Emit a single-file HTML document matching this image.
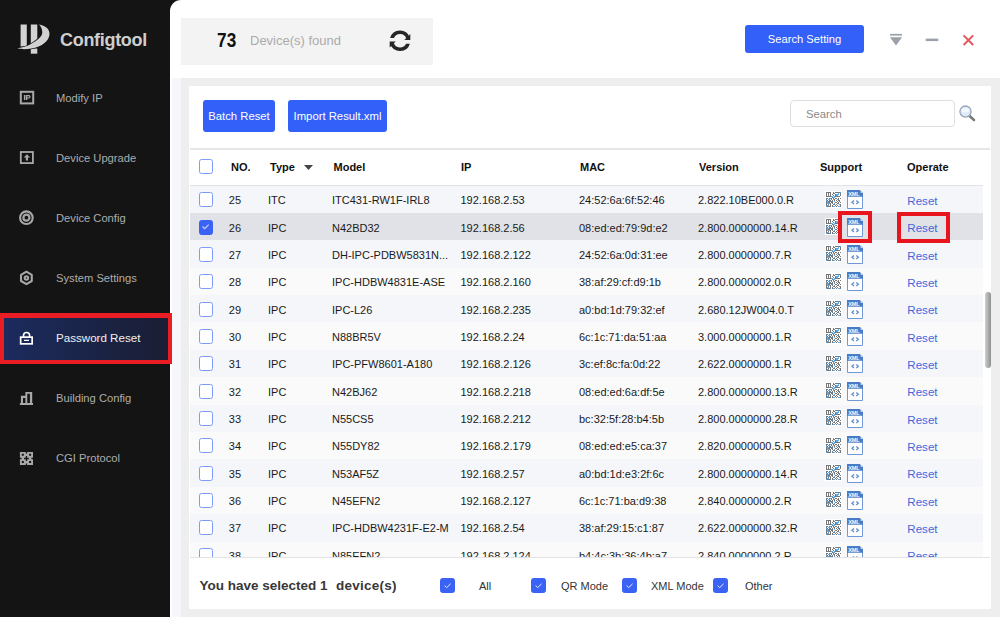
<!DOCTYPE html><html><head><meta charset="utf-8"><style>
*{box-sizing:border-box;margin:0;padding:0}
html,body{width:1000px;height:617px;overflow:hidden;background:#141414;font-family:"Liberation Sans",sans-serif;position:relative}
.abs{position:absolute}
.side-item{position:absolute;left:0;width:170px;height:30px;z-index:6;color:#adadad;font-size:11.2px;line-height:30px}
.side-item .lbl{position:absolute;left:56px;top:0}
.side-item svg{position:absolute;left:19px;top:7px}
#main{position:absolute;left:170px;top:0;width:830px;height:617px;background:#fff;border-top-left-radius:11px}
#found{position:absolute;left:181px;top:18px;width:252px;height:47px;background:#f3f3f3}
.btn{position:absolute;background:#3360f8;color:#fff;border-radius:3px;font-size:11.3px;text-align:center}
#band{position:absolute;left:181.3px;top:78px;width:818.7px;height:539px;background:#eeeeef}
#panel{position:absolute;left:189.4px;top:86.4px;width:801.4px;height:523px;background:#fff}
.row{position:absolute;left:190px;width:793px;font-size:11px;color:#222}
.row span{position:absolute;white-space:nowrap}
.cb{position:absolute;left:198.7px;width:14.8px;height:15px;border:1.4px solid #7b9cfd;border-radius:2.5px;background:#fff}
.cbon{background:#3a63f5;border-color:#3a63f5}
.hdr{position:absolute;font-size:11px;font-weight:700;color:#111;white-space:nowrap}
.reset{color:#4466dc}
</style></head><body>
<svg class="abs" style="left:14px;top:20px" width="40" height="36" viewBox="14 20 40 36">
<rect x="20.6" y="24.5" width="6.2" height="22" fill="#d2d2d2"/>
<rect x="30.8" y="24.5" width="6.5" height="22" fill="#d2d2d2"/>
<rect x="30.8" y="48.5" width="6.5" height="5.2" fill="#d2d2d2"/>
<path d="M38.8 24.5C45.5 25.5 49.6 29 49.5 34C49.3 41 42 47 30 48.8C25 49.5 20 49.2 17.3 48.3C21 47.6 26 46.8 30.5 44.2C37 40.5 42.5 37 42.3 32C42 28.5 40.8 26 38.8 24.5Z" fill="#d2d2d2" stroke="#141414" stroke-width="1.3" paint-order="stroke fill"/>
</svg>
<div class="abs" style="left:60px;top:30px;color:#cecece;font-size:18px;font-weight:700;letter-spacing:-0.3px">Configtool</div>
<div class="side-item" style="top:83px"><svg width="16" height="16" viewBox="0 0 16 16"><rect x="1.8" y="1.8" width="12.4" height="11.6" fill="none" stroke="#a8a8a8" stroke-width="2"/><path d="M4.9 5.1h1.4v4.9H4.9z M6.9 5.1h2.9a1.75 1.75 0 0 1 0 3.5H8.3V10H6.9z M8.3 6.2v1.3h1.4a0.65 0.65 0 0 0 0-1.3z" fill="#a8a8a8" fill-rule="evenodd"/></svg><span class="lbl">Modify IP</span></div>
<div class="side-item" style="top:143px"><svg width="16" height="16" viewBox="0 0 16 16"><rect x="1.8" y="2" width="12.1" height="11.1" fill="none" stroke="#a8a8a8" stroke-width="1.8"/><path d="M7.9 4.2l3.2 3.3H9v2.9H6.8V7.5H4.7z" fill="#a8a8a8"/></svg><span class="lbl">Device Upgrade</span></div>
<div class="side-item" style="top:203px"><svg width="16" height="16" viewBox="0 0 16 16"><circle cx="7.4" cy="7.7" r="6.3" fill="none" stroke="#a8a8a8" stroke-width="2.1"/><circle cx="7.4" cy="7.7" r="3" fill="none" stroke="#a8a8a8" stroke-width="2.2"/></svg><span class="lbl">Device Config</span></div>
<div class="side-item" style="top:263px"><svg width="16" height="16" viewBox="0 0 16 16"><path d="M7.4 1.7L12.77 4.8V11L7.4 14.1L2.03 11V4.8z" fill="none" stroke="#a8a8a8" stroke-width="2.1" stroke-linejoin="round"/><circle cx="7.4" cy="7.9" r="1.75" fill="none" stroke="#a8a8a8" stroke-width="2"/></svg><span class="lbl">System Settings</span></div>
<div class="abs" style="left:0;top:313.2px;width:172px;height:51px;background:#ea1c24;z-index:5"></div>
<div class="abs" style="left:4px;top:318px;width:164px;height:41.5px;background:linear-gradient(90deg,#1b2b5e,#1a1e33);z-index:5"></div>
<div class="side-item" style="top:323px;color:#f0f0f0;font-size:11.6px"><svg width="16" height="16" viewBox="0 0 16 16"><path d="M4.5 7.2V5.6a3.05 3.05 0 0 1 6.1 0V7.2" fill="none" stroke="#fff" stroke-width="1.6"/><rect x="1.65" y="7.15" width="11.5" height="6.7" fill="none" stroke="#fff" stroke-width="1.7"/><rect x="5" y="9.7" width="5" height="1.3" fill="#fff"/></svg><span class="lbl">Password Reset</span></div>
<div class="side-item" style="top:383px"><svg width="16" height="16" viewBox="19 390 16 16"><path fill="#a8a8a8" d="M19.9 402.9H33V405H19.9z M20.9 395.8H25.7V403H20.9z M25.4 391.9H32.2V403H25.4z"/><path fill="#141414" d="M23 398H25.4V402.9H23z M27.3 393.8H29.9V402.9H27.3z"/></svg><span class="lbl">Building Config</span></div>
<div class="side-item" style="top:443px"><svg width="16" height="16" viewBox="0 0 16 16"><path fill-rule="evenodd" fill="#a8a8a8" d="M0.9 1.9h13.1v13.1H0.9z M2.8 3.8h2v2h-2z M10.1 3.8h2v2h-2z M2.8 10.9h2v2h-2z M10.1 10.9h2v2h-2z M6.8 6.1h1.3v1.75h1.75v1.3H8.1v1.75H6.8V9.15H5.05v-1.3H6.8z M6.8 1.9h1.3v1.5H6.8z M6.8 13.5h1.3v1.5H6.8z M0.9 7.85h1.6v1.3H0.9z M12.4 7.85h1.6v1.3h-1.6z"/></svg><span class="lbl">CGI Protocol</span></div>
<div id="main"></div>
<div id="found"></div>
<div class="abs" style="left:217px;top:28.8px;font-size:19.5px;font-weight:700;color:#111;letter-spacing:0.3px;transform:scaleX(0.88);transform-origin:0 0">73</div>
<div class="abs" style="left:250px;top:33px;font-size:13px;color:#ababab">Device(s) found</div>
<svg class="abs" style="left:385px;top:25px" width="30" height="30" viewBox="0 0 30 30"><g fill="#272727">
<path d="M5.12 12.9A10.3 10.3 0 0 1 24.68 12.28L21.3 13.5A6.7 6.7 0 0 0 8.96 12.9Z"/><path d="M19.3 15.07H25.3V9.1Z"/>
<path d="M24.88 18.7A10.3 10.3 0 0 1 5.32 19.32L8.7 18.1A6.7 6.7 0 0 0 21.04 18.7Z"/><path d="M10.7 16.53H4.7V22.5Z"/></g></svg>
<div class="btn" style="left:745px;top:25.3px;width:119px;height:28px;line-height:28px;font-size:11.2px">Search Setting</div>
<svg class="abs" style="left:886px;top:30px" width="90" height="20" viewBox="886 30 90 20">
<rect x="890" y="33.9" width="12" height="1.7" fill="#9aa1ab"/><path d="M890 37.3h12l-6 8.3z" fill="#9aa1ab"/>
<rect x="925.7" y="38.6" width="12.6" height="2.5" fill="#9aa1ab"/>
<path d="M963.6 35.3l9.6 9.7M973.2 35.3l-9.6 9.7" stroke="#e5535b" stroke-width="1.9"/></svg>
<div class="abs" style="left:172px;top:78px;width:9.3px;height:539px;background:#f6f7fa"></div><div id="band"></div><div id="panel"></div>
<div class="btn" style="left:203px;top:100px;width:72px;height:32px;line-height:32px">Batch Reset</div>
<div class="btn" style="left:288px;top:100px;width:99px;height:32px;line-height:32px">Import Result.xml</div>
<div class="abs" style="left:790.2px;top:100.2px;width:165px;height:27.3px;border:1px solid #dcdee4;border-radius:4px;background:#fff"></div>
<div class="abs" style="left:806px;top:108px;font-size:11.3px;color:#8a8a8a">Search</div>
<svg class="abs" style="left:957px;top:102px" width="20" height="20" viewBox="0 0 20 20">
<path d="M12 13.5l5 4.5" stroke="#7b7b7b" stroke-width="2.6" stroke-linecap="round"/>
<circle cx="8.5" cy="9.6" r="5.6" fill="#dfeaf6" stroke="#93a5b8" stroke-width="1.3"/><ellipse cx="8.3" cy="8.3" rx="3.8" ry="2.2" fill="#f4f8fc"/></svg>
<div class="abs" style="left:190px;top:148px;width:800px;height:1.5px;background:#e6e6e6"></div>
<div class="cb" style="top:159px"></div>
<div class="hdr" style="left:231px;top:161px">NO.</div>
<div class="hdr" style="left:270px;top:161px">Type</div>
<div class="hdr" style="left:333.5px;top:161px">Model</div>
<div class="hdr" style="left:461px;top:161px">IP</div>
<div class="hdr" style="left:580px;top:161px">MAC</div>
<div class="hdr" style="left:699px;top:161px">Version</div>
<div class="hdr" style="left:820px;top:161px">Support</div>
<div class="hdr" style="left:907px;top:161px">Operate</div>
<svg class="abs" style="left:304px;top:165px" width="9" height="6"><path d="M0 0h9l-4.5 5z" fill="#444"/></svg>
<div class="abs" style="left:190px;top:185px;width:793px;height:1px;background:#e3e3e6"></div>
<div class="abs" style="left:190px;top:186px;width:793px;height:371px;overflow:hidden">
<div class="abs" style="left:0;top:-0.65px;width:793px;height:27.5px;background:#f5f6fa"></div>
<div class="cb" style="left:8.7px;top:6.46px"></div>
<div class="abs" style="left:38.8px;top:7.36px;font-size:11px;color:#1a1a1a;white-space:nowrap;line-height:14px">25</div>
<div class="abs" style="left:78px;top:7.36px;font-size:11px;color:#1a1a1a;white-space:nowrap;line-height:14px">ITC</div>
<div class="abs" style="left:142px;top:7.36px;font-size:11px;color:#1a1a1a;white-space:nowrap;line-height:14px">ITC431-RW1F-IRL8</div>
<div class="abs" style="left:270.5px;top:7.36px;font-size:11px;color:#1a1a1a;white-space:nowrap;line-height:14px">192.168.2.53</div>
<div class="abs" style="left:389px;top:7.36px;font-size:11px;color:#1a1a1a;white-space:nowrap;line-height:14px">24:52:6a:6f:52:46</div>
<div class="abs" style="left:508px;top:7.36px;font-size:11px;color:#1a1a1a;white-space:nowrap;line-height:14px">2.822.10BE000.0.R</div>
<div class="abs" style="left:634.5px;top:4.66px"><svg class="qr" width="17" height="17" viewBox="0 0 17 17"><rect width="17" height="17" fill="#fff"/><g fill="#777777" shape-rendering="crispEdges"><rect x="1" y="1" width="1" height="1"/><rect x="2" y="1" width="1" height="1"/><rect x="3" y="1" width="1" height="1"/><rect x="4" y="1" width="1" height="1"/><rect x="5" y="1" width="1" height="1"/><rect x="8" y="1" width="1" height="1"/><rect x="10" y="1" width="1" height="1"/><rect x="11" y="1" width="1" height="1"/><rect x="12" y="1" width="1" height="1"/><rect x="13" y="1" width="1" height="1"/><rect x="14" y="1" width="1" height="1"/><rect x="15" y="1" width="1" height="1" fill="#5aaaee"/><rect x="1" y="2" width="1" height="1"/><rect x="3" y="2" width="1" height="1"/><rect x="5" y="2" width="1" height="1"/><rect x="8" y="2" width="1" height="1"/><rect x="9" y="2" width="1" height="1"/><rect x="13" y="2" width="1" height="1" fill="#5aaaee"/><rect x="15" y="2" width="1" height="1"/><rect x="1" y="3" width="1" height="1"/><rect x="3" y="3" width="1" height="1"/><rect x="5" y="3" width="1" height="1"/><rect x="7" y="3" width="1" height="1"/><rect x="10" y="3" width="1" height="1"/><rect x="11" y="3" width="1" height="1" fill="#5aaaee"/><rect x="12" y="3" width="1" height="1" fill="#5aaaee"/><rect x="13" y="3" width="1" height="1" fill="#5aaaee"/><rect x="15" y="3" width="1" height="1"/><rect x="1" y="4" width="1" height="1"/><rect x="3" y="4" width="1" height="1"/><rect x="5" y="4" width="1" height="1"/><rect x="8" y="4" width="1" height="1"/><rect x="10" y="4" width="1" height="1"/><rect x="11" y="4" width="1" height="1" fill="#5aaaee"/><rect x="12" y="4" width="1" height="1" fill="#5aaaee"/><rect x="15" y="4" width="1" height="1"/><rect x="1" y="5" width="1" height="1"/><rect x="2" y="5" width="1" height="1"/><rect x="3" y="5" width="1" height="1"/><rect x="4" y="5" width="1" height="1"/><rect x="5" y="5" width="1" height="1"/><rect x="6" y="5" width="1" height="1" fill="#5aaaee"/><rect x="7" y="5" width="1" height="1" fill="#5aaaee"/><rect x="9" y="5" width="1" height="1" fill="#5aaaee"/><rect x="10" y="5" width="1" height="1"/><rect x="11" y="5" width="1" height="1"/><rect x="12" y="5" width="1" height="1"/><rect x="13" y="5" width="1" height="1"/><rect x="14" y="5" width="1" height="1"/><rect x="7" y="6" width="1" height="1"/><rect x="8" y="6" width="1" height="1" fill="#5aaaee"/><rect x="9" y="6" width="1" height="1" fill="#5aaaee"/><rect x="1" y="7" width="1" height="1"/><rect x="2" y="7" width="1" height="1"/><rect x="4" y="7" width="1" height="1"/><rect x="5" y="7" width="1" height="1" fill="#5aaaee"/><rect x="6" y="7" width="1" height="1"/><rect x="8" y="7" width="1" height="1"/><rect x="10" y="7" width="1" height="1"/><rect x="11" y="7" width="1" height="1"/><rect x="13" y="7" width="1" height="1"/><rect x="15" y="7" width="1" height="1"/><rect x="1" y="8" width="1" height="1"/><rect x="3" y="8" width="1" height="1" fill="#5aaaee"/><rect x="4" y="8" width="1" height="1" fill="#5aaaee"/><rect x="6" y="8" width="1" height="1"/><rect x="8" y="8" width="1" height="1" fill="#5aaaee"/><rect x="9" y="8" width="1" height="1"/><rect x="12" y="8" width="1" height="1" fill="#5aaaee"/><rect x="13" y="8" width="1" height="1"/><rect x="1" y="9" width="1" height="1" fill="#5aaaee"/><rect x="2" y="9" width="1" height="1"/><rect x="4" y="9" width="1" height="1"/><rect x="5" y="9" width="1" height="1"/><rect x="7" y="9" width="1" height="1"/><rect x="9" y="9" width="1" height="1"/><rect x="11" y="9" width="1" height="1"/><rect x="13" y="9" width="1" height="1"/><rect x="14" y="9" width="1" height="1"/><rect x="1" y="10" width="1" height="1"/><rect x="2" y="10" width="1" height="1" fill="#5aaaee"/><rect x="3" y="10" width="1" height="1" fill="#5aaaee"/><rect x="4" y="10" width="1" height="1"/><rect x="5" y="10" width="1" height="1"/><rect x="6" y="10" width="1" height="1"/><rect x="7" y="10" width="1" height="1"/><rect x="9" y="10" width="1" height="1" fill="#5aaaee"/><rect x="12" y="10" width="1" height="1"/><rect x="14" y="10" width="1" height="1"/><rect x="1" y="11" width="1" height="1"/><rect x="2" y="11" width="1" height="1" fill="#5aaaee"/><rect x="3" y="11" width="1" height="1"/><rect x="4" y="11" width="1" height="1"/><rect x="6" y="11" width="1" height="1"/><rect x="7" y="11" width="1" height="1"/><rect x="10" y="11" width="1" height="1"/><rect x="11" y="11" width="1" height="1"/><rect x="13" y="11" width="1" height="1"/><rect x="15" y="11" width="1" height="1"/><rect x="1" y="12" width="1" height="1"/><rect x="2" y="12" width="1" height="1" fill="#5aaaee"/><rect x="3" y="12" width="1" height="1" fill="#5aaaee"/><rect x="4" y="12" width="1" height="1" fill="#5aaaee"/><rect x="5" y="12" width="1" height="1"/><rect x="7" y="12" width="1" height="1"/><rect x="9" y="12" width="1" height="1" fill="#5aaaee"/><rect x="12" y="12" width="1" height="1"/><rect x="13" y="12" width="1" height="1"/><rect x="1" y="13" width="1" height="1"/><rect x="3" y="13" width="1" height="1"/><rect x="5" y="13" width="1" height="1"/><rect x="8" y="13" width="1" height="1"/><rect x="9" y="13" width="1" height="1"/><rect x="11" y="13" width="1" height="1"/><rect x="14" y="13" width="1" height="1" fill="#5aaaee"/><rect x="15" y="13" width="1" height="1"/><rect x="1" y="14" width="1" height="1"/><rect x="2" y="14" width="1" height="1" fill="#5aaaee"/><rect x="3" y="14" width="1" height="1" fill="#5aaaee"/><rect x="5" y="14" width="1" height="1"/><rect x="7" y="14" width="1" height="1"/><rect x="10" y="14" width="1" height="1"/><rect x="12" y="14" width="1" height="1"/><rect x="15" y="14" width="1" height="1"/><rect x="1" y="15" width="1" height="1" fill="#5aaaee"/><rect x="2" y="15" width="1" height="1"/><rect x="3" y="15" width="1" height="1"/><rect x="4" y="15" width="1" height="1"/><rect x="5" y="15" width="1" height="1"/><rect x="7" y="15" width="1" height="1"/><rect x="8" y="15" width="1" height="1" fill="#5aaaee"/><rect x="9" y="15" width="1" height="1" fill="#5aaaee"/><rect x="11" y="15" width="1" height="1"/><rect x="13" y="15" width="1" height="1" fill="#5aaaee"/><rect x="14" y="15" width="1" height="1" fill="#5aaaee"/><rect x="15" y="15" width="1" height="1"/></g></svg></div>
<div class="abs" style="left:657px;top:4.36px"><svg class="xml" width="16" height="19" viewBox="0 0 16 19"><path d="M0.5 0.5h12.5l2.5 2.5v15.5h-15z" fill="#fff" stroke="#6f98d4" stroke-width="1"/>
<path d="M0 0h13l3 3v3.8h-16z" fill="#4a7cc6"/><path d="M13 0v3h3z" fill="#fff"/><path d="M13.3 0.8v2.4h2.2" fill="none" stroke="#4a7cc6" stroke-width="0.9"/>
<text x="1.3" y="5.9" font-family="Liberation Sans" font-size="5.6" font-weight="700" fill="#f4f8ff" letter-spacing="-0.2">XML</text>
<path d="M7 10.5l-2 1.7 2 1.7M9.3 10.5l2 1.7-2 1.7" fill="none" stroke="#5f8ccf" stroke-width="1.3"/></svg></div>
<div class="abs reset" style="left:717.3px;top:8.16px;font-size:11.6px;line-height:14px">Reset</div>
<div class="abs" style="left:0;top:26.75px;width:793px;height:27.5px;background:#e1e2e7"></div>
<div class="cb cbon" style="left:8.7px;top:33.79px"><svg width="11" height="11" style="position:absolute;left:0.5px;top:0.5px"><path d="M2.5 5.5l2.2 2.2 4-4" fill="none" stroke="#c9d4ff" stroke-width="1.1"/></svg></div>
<div class="abs" style="left:38.8px;top:34.69px;font-size:11px;color:#1a1a1a;white-space:nowrap;line-height:14px">26</div>
<div class="abs" style="left:78px;top:34.69px;font-size:11px;color:#1a1a1a;white-space:nowrap;line-height:14px">IPC</div>
<div class="abs" style="left:142px;top:34.69px;font-size:11px;color:#1a1a1a;white-space:nowrap;line-height:14px">N42BD32</div>
<div class="abs" style="left:270.5px;top:34.69px;font-size:11px;color:#1a1a1a;white-space:nowrap;line-height:14px">192.168.2.56</div>
<div class="abs" style="left:389px;top:34.69px;font-size:11px;color:#1a1a1a;white-space:nowrap;line-height:14px">08:ed:ed:79:9d:e2</div>
<div class="abs" style="left:508px;top:34.69px;font-size:11px;color:#1a1a1a;white-space:nowrap;line-height:14px">2.800.0000000.14.R</div>
<div class="abs" style="left:634.5px;top:31.99px"><svg class="qr" width="17" height="17" viewBox="0 0 17 17"><rect width="17" height="17" fill="#fff"/><g fill="#777777" shape-rendering="crispEdges"><rect x="1" y="1" width="1" height="1"/><rect x="2" y="1" width="1" height="1"/><rect x="3" y="1" width="1" height="1"/><rect x="4" y="1" width="1" height="1"/><rect x="5" y="1" width="1" height="1"/><rect x="8" y="1" width="1" height="1"/><rect x="10" y="1" width="1" height="1"/><rect x="11" y="1" width="1" height="1"/><rect x="12" y="1" width="1" height="1"/><rect x="13" y="1" width="1" height="1"/><rect x="14" y="1" width="1" height="1"/><rect x="15" y="1" width="1" height="1" fill="#5aaaee"/><rect x="1" y="2" width="1" height="1"/><rect x="3" y="2" width="1" height="1"/><rect x="5" y="2" width="1" height="1"/><rect x="8" y="2" width="1" height="1"/><rect x="9" y="2" width="1" height="1"/><rect x="13" y="2" width="1" height="1" fill="#5aaaee"/><rect x="15" y="2" width="1" height="1"/><rect x="1" y="3" width="1" height="1"/><rect x="3" y="3" width="1" height="1"/><rect x="5" y="3" width="1" height="1"/><rect x="7" y="3" width="1" height="1"/><rect x="10" y="3" width="1" height="1"/><rect x="11" y="3" width="1" height="1" fill="#5aaaee"/><rect x="12" y="3" width="1" height="1" fill="#5aaaee"/><rect x="13" y="3" width="1" height="1" fill="#5aaaee"/><rect x="15" y="3" width="1" height="1"/><rect x="1" y="4" width="1" height="1"/><rect x="3" y="4" width="1" height="1"/><rect x="5" y="4" width="1" height="1"/><rect x="8" y="4" width="1" height="1"/><rect x="10" y="4" width="1" height="1"/><rect x="11" y="4" width="1" height="1" fill="#5aaaee"/><rect x="12" y="4" width="1" height="1" fill="#5aaaee"/><rect x="15" y="4" width="1" height="1"/><rect x="1" y="5" width="1" height="1"/><rect x="2" y="5" width="1" height="1"/><rect x="3" y="5" width="1" height="1"/><rect x="4" y="5" width="1" height="1"/><rect x="5" y="5" width="1" height="1"/><rect x="6" y="5" width="1" height="1" fill="#5aaaee"/><rect x="7" y="5" width="1" height="1" fill="#5aaaee"/><rect x="9" y="5" width="1" height="1" fill="#5aaaee"/><rect x="10" y="5" width="1" height="1"/><rect x="11" y="5" width="1" height="1"/><rect x="12" y="5" width="1" height="1"/><rect x="13" y="5" width="1" height="1"/><rect x="14" y="5" width="1" height="1"/><rect x="7" y="6" width="1" height="1"/><rect x="8" y="6" width="1" height="1" fill="#5aaaee"/><rect x="9" y="6" width="1" height="1" fill="#5aaaee"/><rect x="1" y="7" width="1" height="1"/><rect x="2" y="7" width="1" height="1"/><rect x="4" y="7" width="1" height="1"/><rect x="5" y="7" width="1" height="1" fill="#5aaaee"/><rect x="6" y="7" width="1" height="1"/><rect x="8" y="7" width="1" height="1"/><rect x="10" y="7" width="1" height="1"/><rect x="11" y="7" width="1" height="1"/><rect x="13" y="7" width="1" height="1"/><rect x="15" y="7" width="1" height="1"/><rect x="1" y="8" width="1" height="1"/><rect x="3" y="8" width="1" height="1" fill="#5aaaee"/><rect x="4" y="8" width="1" height="1" fill="#5aaaee"/><rect x="6" y="8" width="1" height="1"/><rect x="8" y="8" width="1" height="1" fill="#5aaaee"/><rect x="9" y="8" width="1" height="1"/><rect x="12" y="8" width="1" height="1" fill="#5aaaee"/><rect x="13" y="8" width="1" height="1"/><rect x="1" y="9" width="1" height="1" fill="#5aaaee"/><rect x="2" y="9" width="1" height="1"/><rect x="4" y="9" width="1" height="1"/><rect x="5" y="9" width="1" height="1"/><rect x="7" y="9" width="1" height="1"/><rect x="9" y="9" width="1" height="1"/><rect x="11" y="9" width="1" height="1"/><rect x="13" y="9" width="1" height="1"/><rect x="14" y="9" width="1" height="1"/><rect x="1" y="10" width="1" height="1"/><rect x="2" y="10" width="1" height="1" fill="#5aaaee"/><rect x="3" y="10" width="1" height="1" fill="#5aaaee"/><rect x="4" y="10" width="1" height="1"/><rect x="5" y="10" width="1" height="1"/><rect x="6" y="10" width="1" height="1"/><rect x="7" y="10" width="1" height="1"/><rect x="9" y="10" width="1" height="1" fill="#5aaaee"/><rect x="12" y="10" width="1" height="1"/><rect x="14" y="10" width="1" height="1"/><rect x="1" y="11" width="1" height="1"/><rect x="2" y="11" width="1" height="1" fill="#5aaaee"/><rect x="3" y="11" width="1" height="1"/><rect x="4" y="11" width="1" height="1"/><rect x="6" y="11" width="1" height="1"/><rect x="7" y="11" width="1" height="1"/><rect x="10" y="11" width="1" height="1"/><rect x="11" y="11" width="1" height="1"/><rect x="13" y="11" width="1" height="1"/><rect x="15" y="11" width="1" height="1"/><rect x="1" y="12" width="1" height="1"/><rect x="2" y="12" width="1" height="1" fill="#5aaaee"/><rect x="3" y="12" width="1" height="1" fill="#5aaaee"/><rect x="4" y="12" width="1" height="1" fill="#5aaaee"/><rect x="5" y="12" width="1" height="1"/><rect x="7" y="12" width="1" height="1"/><rect x="9" y="12" width="1" height="1" fill="#5aaaee"/><rect x="12" y="12" width="1" height="1"/><rect x="13" y="12" width="1" height="1"/><rect x="1" y="13" width="1" height="1"/><rect x="3" y="13" width="1" height="1"/><rect x="5" y="13" width="1" height="1"/><rect x="8" y="13" width="1" height="1"/><rect x="9" y="13" width="1" height="1"/><rect x="11" y="13" width="1" height="1"/><rect x="14" y="13" width="1" height="1" fill="#5aaaee"/><rect x="15" y="13" width="1" height="1"/><rect x="1" y="14" width="1" height="1"/><rect x="2" y="14" width="1" height="1" fill="#5aaaee"/><rect x="3" y="14" width="1" height="1" fill="#5aaaee"/><rect x="5" y="14" width="1" height="1"/><rect x="7" y="14" width="1" height="1"/><rect x="10" y="14" width="1" height="1"/><rect x="12" y="14" width="1" height="1"/><rect x="15" y="14" width="1" height="1"/><rect x="1" y="15" width="1" height="1" fill="#5aaaee"/><rect x="2" y="15" width="1" height="1"/><rect x="3" y="15" width="1" height="1"/><rect x="4" y="15" width="1" height="1"/><rect x="5" y="15" width="1" height="1"/><rect x="7" y="15" width="1" height="1"/><rect x="8" y="15" width="1" height="1" fill="#5aaaee"/><rect x="9" y="15" width="1" height="1" fill="#5aaaee"/><rect x="11" y="15" width="1" height="1"/><rect x="13" y="15" width="1" height="1" fill="#5aaaee"/><rect x="14" y="15" width="1" height="1" fill="#5aaaee"/><rect x="15" y="15" width="1" height="1"/></g></svg></div>
<div class="abs" style="left:657px;top:31.69px"><svg class="xml" width="16" height="19" viewBox="0 0 16 19"><path d="M0.5 0.5h12.5l2.5 2.5v15.5h-15z" fill="#fff" stroke="#6f98d4" stroke-width="1"/>
<path d="M0 0h13l3 3v3.8h-16z" fill="#4a7cc6"/><path d="M13 0v3h3z" fill="#fff"/><path d="M13.3 0.8v2.4h2.2" fill="none" stroke="#4a7cc6" stroke-width="0.9"/>
<text x="1.3" y="5.9" font-family="Liberation Sans" font-size="5.6" font-weight="700" fill="#f4f8ff" letter-spacing="-0.2">XML</text>
<path d="M7 10.5l-2 1.7 2 1.7M9.3 10.5l2 1.7-2 1.7" fill="none" stroke="#5f8ccf" stroke-width="1.3"/></svg></div>
<div class="abs reset" style="left:717.3px;top:35.49px;font-size:11.6px;line-height:14px">Reset</div>
<div class="abs" style="left:0;top:54.15px;width:793px;height:27.5px;background:#f5f6fa"></div>
<div class="cb" style="left:8.7px;top:61.12px"></div>
<div class="abs" style="left:38.8px;top:62.02px;font-size:11px;color:#1a1a1a;white-space:nowrap;line-height:14px">27</div>
<div class="abs" style="left:78px;top:62.02px;font-size:11px;color:#1a1a1a;white-space:nowrap;line-height:14px">IPC</div>
<div class="abs" style="left:142px;top:62.02px;font-size:11px;color:#1a1a1a;white-space:nowrap;line-height:14px">DH-IPC-PDBW5831N...</div>
<div class="abs" style="left:270.5px;top:62.02px;font-size:11px;color:#1a1a1a;white-space:nowrap;line-height:14px">192.168.2.122</div>
<div class="abs" style="left:389px;top:62.02px;font-size:11px;color:#1a1a1a;white-space:nowrap;line-height:14px">24:52:6a:0d:31:ee</div>
<div class="abs" style="left:508px;top:62.02px;font-size:11px;color:#1a1a1a;white-space:nowrap;line-height:14px">2.800.0000000.7.R</div>
<div class="abs" style="left:634.5px;top:59.32px"><svg class="qr" width="17" height="17" viewBox="0 0 17 17"><rect width="17" height="17" fill="#fff"/><g fill="#777777" shape-rendering="crispEdges"><rect x="1" y="1" width="1" height="1"/><rect x="2" y="1" width="1" height="1"/><rect x="3" y="1" width="1" height="1"/><rect x="4" y="1" width="1" height="1"/><rect x="5" y="1" width="1" height="1"/><rect x="8" y="1" width="1" height="1"/><rect x="10" y="1" width="1" height="1"/><rect x="11" y="1" width="1" height="1"/><rect x="12" y="1" width="1" height="1"/><rect x="13" y="1" width="1" height="1"/><rect x="14" y="1" width="1" height="1"/><rect x="15" y="1" width="1" height="1" fill="#5aaaee"/><rect x="1" y="2" width="1" height="1"/><rect x="3" y="2" width="1" height="1"/><rect x="5" y="2" width="1" height="1"/><rect x="8" y="2" width="1" height="1"/><rect x="9" y="2" width="1" height="1"/><rect x="13" y="2" width="1" height="1" fill="#5aaaee"/><rect x="15" y="2" width="1" height="1"/><rect x="1" y="3" width="1" height="1"/><rect x="3" y="3" width="1" height="1"/><rect x="5" y="3" width="1" height="1"/><rect x="7" y="3" width="1" height="1"/><rect x="10" y="3" width="1" height="1"/><rect x="11" y="3" width="1" height="1" fill="#5aaaee"/><rect x="12" y="3" width="1" height="1" fill="#5aaaee"/><rect x="13" y="3" width="1" height="1" fill="#5aaaee"/><rect x="15" y="3" width="1" height="1"/><rect x="1" y="4" width="1" height="1"/><rect x="3" y="4" width="1" height="1"/><rect x="5" y="4" width="1" height="1"/><rect x="8" y="4" width="1" height="1"/><rect x="10" y="4" width="1" height="1"/><rect x="11" y="4" width="1" height="1" fill="#5aaaee"/><rect x="12" y="4" width="1" height="1" fill="#5aaaee"/><rect x="15" y="4" width="1" height="1"/><rect x="1" y="5" width="1" height="1"/><rect x="2" y="5" width="1" height="1"/><rect x="3" y="5" width="1" height="1"/><rect x="4" y="5" width="1" height="1"/><rect x="5" y="5" width="1" height="1"/><rect x="6" y="5" width="1" height="1" fill="#5aaaee"/><rect x="7" y="5" width="1" height="1" fill="#5aaaee"/><rect x="9" y="5" width="1" height="1" fill="#5aaaee"/><rect x="10" y="5" width="1" height="1"/><rect x="11" y="5" width="1" height="1"/><rect x="12" y="5" width="1" height="1"/><rect x="13" y="5" width="1" height="1"/><rect x="14" y="5" width="1" height="1"/><rect x="7" y="6" width="1" height="1"/><rect x="8" y="6" width="1" height="1" fill="#5aaaee"/><rect x="9" y="6" width="1" height="1" fill="#5aaaee"/><rect x="1" y="7" width="1" height="1"/><rect x="2" y="7" width="1" height="1"/><rect x="4" y="7" width="1" height="1"/><rect x="5" y="7" width="1" height="1" fill="#5aaaee"/><rect x="6" y="7" width="1" height="1"/><rect x="8" y="7" width="1" height="1"/><rect x="10" y="7" width="1" height="1"/><rect x="11" y="7" width="1" height="1"/><rect x="13" y="7" width="1" height="1"/><rect x="15" y="7" width="1" height="1"/><rect x="1" y="8" width="1" height="1"/><rect x="3" y="8" width="1" height="1" fill="#5aaaee"/><rect x="4" y="8" width="1" height="1" fill="#5aaaee"/><rect x="6" y="8" width="1" height="1"/><rect x="8" y="8" width="1" height="1" fill="#5aaaee"/><rect x="9" y="8" width="1" height="1"/><rect x="12" y="8" width="1" height="1" fill="#5aaaee"/><rect x="13" y="8" width="1" height="1"/><rect x="1" y="9" width="1" height="1" fill="#5aaaee"/><rect x="2" y="9" width="1" height="1"/><rect x="4" y="9" width="1" height="1"/><rect x="5" y="9" width="1" height="1"/><rect x="7" y="9" width="1" height="1"/><rect x="9" y="9" width="1" height="1"/><rect x="11" y="9" width="1" height="1"/><rect x="13" y="9" width="1" height="1"/><rect x="14" y="9" width="1" height="1"/><rect x="1" y="10" width="1" height="1"/><rect x="2" y="10" width="1" height="1" fill="#5aaaee"/><rect x="3" y="10" width="1" height="1" fill="#5aaaee"/><rect x="4" y="10" width="1" height="1"/><rect x="5" y="10" width="1" height="1"/><rect x="6" y="10" width="1" height="1"/><rect x="7" y="10" width="1" height="1"/><rect x="9" y="10" width="1" height="1" fill="#5aaaee"/><rect x="12" y="10" width="1" height="1"/><rect x="14" y="10" width="1" height="1"/><rect x="1" y="11" width="1" height="1"/><rect x="2" y="11" width="1" height="1" fill="#5aaaee"/><rect x="3" y="11" width="1" height="1"/><rect x="4" y="11" width="1" height="1"/><rect x="6" y="11" width="1" height="1"/><rect x="7" y="11" width="1" height="1"/><rect x="10" y="11" width="1" height="1"/><rect x="11" y="11" width="1" height="1"/><rect x="13" y="11" width="1" height="1"/><rect x="15" y="11" width="1" height="1"/><rect x="1" y="12" width="1" height="1"/><rect x="2" y="12" width="1" height="1" fill="#5aaaee"/><rect x="3" y="12" width="1" height="1" fill="#5aaaee"/><rect x="4" y="12" width="1" height="1" fill="#5aaaee"/><rect x="5" y="12" width="1" height="1"/><rect x="7" y="12" width="1" height="1"/><rect x="9" y="12" width="1" height="1" fill="#5aaaee"/><rect x="12" y="12" width="1" height="1"/><rect x="13" y="12" width="1" height="1"/><rect x="1" y="13" width="1" height="1"/><rect x="3" y="13" width="1" height="1"/><rect x="5" y="13" width="1" height="1"/><rect x="8" y="13" width="1" height="1"/><rect x="9" y="13" width="1" height="1"/><rect x="11" y="13" width="1" height="1"/><rect x="14" y="13" width="1" height="1" fill="#5aaaee"/><rect x="15" y="13" width="1" height="1"/><rect x="1" y="14" width="1" height="1"/><rect x="2" y="14" width="1" height="1" fill="#5aaaee"/><rect x="3" y="14" width="1" height="1" fill="#5aaaee"/><rect x="5" y="14" width="1" height="1"/><rect x="7" y="14" width="1" height="1"/><rect x="10" y="14" width="1" height="1"/><rect x="12" y="14" width="1" height="1"/><rect x="15" y="14" width="1" height="1"/><rect x="1" y="15" width="1" height="1" fill="#5aaaee"/><rect x="2" y="15" width="1" height="1"/><rect x="3" y="15" width="1" height="1"/><rect x="4" y="15" width="1" height="1"/><rect x="5" y="15" width="1" height="1"/><rect x="7" y="15" width="1" height="1"/><rect x="8" y="15" width="1" height="1" fill="#5aaaee"/><rect x="9" y="15" width="1" height="1" fill="#5aaaee"/><rect x="11" y="15" width="1" height="1"/><rect x="13" y="15" width="1" height="1" fill="#5aaaee"/><rect x="14" y="15" width="1" height="1" fill="#5aaaee"/><rect x="15" y="15" width="1" height="1"/></g></svg></div>
<div class="abs" style="left:657px;top:59.02px"><svg class="xml" width="16" height="19" viewBox="0 0 16 19"><path d="M0.5 0.5h12.5l2.5 2.5v15.5h-15z" fill="#fff" stroke="#6f98d4" stroke-width="1"/>
<path d="M0 0h13l3 3v3.8h-16z" fill="#4a7cc6"/><path d="M13 0v3h3z" fill="#fff"/><path d="M13.3 0.8v2.4h2.2" fill="none" stroke="#4a7cc6" stroke-width="0.9"/>
<text x="1.3" y="5.9" font-family="Liberation Sans" font-size="5.6" font-weight="700" fill="#f4f8ff" letter-spacing="-0.2">XML</text>
<path d="M7 10.5l-2 1.7 2 1.7M9.3 10.5l2 1.7-2 1.7" fill="none" stroke="#5f8ccf" stroke-width="1.3"/></svg></div>
<div class="abs reset" style="left:717.3px;top:62.82px;font-size:11.6px;line-height:14px">Reset</div>
<div class="abs" style="left:0;top:81.55px;width:793px;height:27.5px;background:#fafafb"></div>
<div class="cb" style="left:8.7px;top:88.45px"></div>
<div class="abs" style="left:38.8px;top:89.36px;font-size:11px;color:#1a1a1a;white-space:nowrap;line-height:14px">28</div>
<div class="abs" style="left:78px;top:89.36px;font-size:11px;color:#1a1a1a;white-space:nowrap;line-height:14px">IPC</div>
<div class="abs" style="left:142px;top:89.36px;font-size:11px;color:#1a1a1a;white-space:nowrap;line-height:14px">IPC-HDBW4831E-ASE</div>
<div class="abs" style="left:270.5px;top:89.36px;font-size:11px;color:#1a1a1a;white-space:nowrap;line-height:14px">192.168.2.160</div>
<div class="abs" style="left:389px;top:89.36px;font-size:11px;color:#1a1a1a;white-space:nowrap;line-height:14px">38:af:29:cf:d9:1b</div>
<div class="abs" style="left:508px;top:89.36px;font-size:11px;color:#1a1a1a;white-space:nowrap;line-height:14px">2.800.0000002.0.R</div>
<div class="abs" style="left:634.5px;top:86.66px"><svg class="qr" width="17" height="17" viewBox="0 0 17 17"><rect width="17" height="17" fill="#fff"/><g fill="#777777" shape-rendering="crispEdges"><rect x="1" y="1" width="1" height="1"/><rect x="2" y="1" width="1" height="1"/><rect x="3" y="1" width="1" height="1"/><rect x="4" y="1" width="1" height="1"/><rect x="5" y="1" width="1" height="1"/><rect x="8" y="1" width="1" height="1"/><rect x="10" y="1" width="1" height="1"/><rect x="11" y="1" width="1" height="1"/><rect x="12" y="1" width="1" height="1"/><rect x="13" y="1" width="1" height="1"/><rect x="14" y="1" width="1" height="1"/><rect x="15" y="1" width="1" height="1" fill="#5aaaee"/><rect x="1" y="2" width="1" height="1"/><rect x="3" y="2" width="1" height="1"/><rect x="5" y="2" width="1" height="1"/><rect x="8" y="2" width="1" height="1"/><rect x="9" y="2" width="1" height="1"/><rect x="13" y="2" width="1" height="1" fill="#5aaaee"/><rect x="15" y="2" width="1" height="1"/><rect x="1" y="3" width="1" height="1"/><rect x="3" y="3" width="1" height="1"/><rect x="5" y="3" width="1" height="1"/><rect x="7" y="3" width="1" height="1"/><rect x="10" y="3" width="1" height="1"/><rect x="11" y="3" width="1" height="1" fill="#5aaaee"/><rect x="12" y="3" width="1" height="1" fill="#5aaaee"/><rect x="13" y="3" width="1" height="1" fill="#5aaaee"/><rect x="15" y="3" width="1" height="1"/><rect x="1" y="4" width="1" height="1"/><rect x="3" y="4" width="1" height="1"/><rect x="5" y="4" width="1" height="1"/><rect x="8" y="4" width="1" height="1"/><rect x="10" y="4" width="1" height="1"/><rect x="11" y="4" width="1" height="1" fill="#5aaaee"/><rect x="12" y="4" width="1" height="1" fill="#5aaaee"/><rect x="15" y="4" width="1" height="1"/><rect x="1" y="5" width="1" height="1"/><rect x="2" y="5" width="1" height="1"/><rect x="3" y="5" width="1" height="1"/><rect x="4" y="5" width="1" height="1"/><rect x="5" y="5" width="1" height="1"/><rect x="6" y="5" width="1" height="1" fill="#5aaaee"/><rect x="7" y="5" width="1" height="1" fill="#5aaaee"/><rect x="9" y="5" width="1" height="1" fill="#5aaaee"/><rect x="10" y="5" width="1" height="1"/><rect x="11" y="5" width="1" height="1"/><rect x="12" y="5" width="1" height="1"/><rect x="13" y="5" width="1" height="1"/><rect x="14" y="5" width="1" height="1"/><rect x="7" y="6" width="1" height="1"/><rect x="8" y="6" width="1" height="1" fill="#5aaaee"/><rect x="9" y="6" width="1" height="1" fill="#5aaaee"/><rect x="1" y="7" width="1" height="1"/><rect x="2" y="7" width="1" height="1"/><rect x="4" y="7" width="1" height="1"/><rect x="5" y="7" width="1" height="1" fill="#5aaaee"/><rect x="6" y="7" width="1" height="1"/><rect x="8" y="7" width="1" height="1"/><rect x="10" y="7" width="1" height="1"/><rect x="11" y="7" width="1" height="1"/><rect x="13" y="7" width="1" height="1"/><rect x="15" y="7" width="1" height="1"/><rect x="1" y="8" width="1" height="1"/><rect x="3" y="8" width="1" height="1" fill="#5aaaee"/><rect x="4" y="8" width="1" height="1" fill="#5aaaee"/><rect x="6" y="8" width="1" height="1"/><rect x="8" y="8" width="1" height="1" fill="#5aaaee"/><rect x="9" y="8" width="1" height="1"/><rect x="12" y="8" width="1" height="1" fill="#5aaaee"/><rect x="13" y="8" width="1" height="1"/><rect x="1" y="9" width="1" height="1" fill="#5aaaee"/><rect x="2" y="9" width="1" height="1"/><rect x="4" y="9" width="1" height="1"/><rect x="5" y="9" width="1" height="1"/><rect x="7" y="9" width="1" height="1"/><rect x="9" y="9" width="1" height="1"/><rect x="11" y="9" width="1" height="1"/><rect x="13" y="9" width="1" height="1"/><rect x="14" y="9" width="1" height="1"/><rect x="1" y="10" width="1" height="1"/><rect x="2" y="10" width="1" height="1" fill="#5aaaee"/><rect x="3" y="10" width="1" height="1" fill="#5aaaee"/><rect x="4" y="10" width="1" height="1"/><rect x="5" y="10" width="1" height="1"/><rect x="6" y="10" width="1" height="1"/><rect x="7" y="10" width="1" height="1"/><rect x="9" y="10" width="1" height="1" fill="#5aaaee"/><rect x="12" y="10" width="1" height="1"/><rect x="14" y="10" width="1" height="1"/><rect x="1" y="11" width="1" height="1"/><rect x="2" y="11" width="1" height="1" fill="#5aaaee"/><rect x="3" y="11" width="1" height="1"/><rect x="4" y="11" width="1" height="1"/><rect x="6" y="11" width="1" height="1"/><rect x="7" y="11" width="1" height="1"/><rect x="10" y="11" width="1" height="1"/><rect x="11" y="11" width="1" height="1"/><rect x="13" y="11" width="1" height="1"/><rect x="15" y="11" width="1" height="1"/><rect x="1" y="12" width="1" height="1"/><rect x="2" y="12" width="1" height="1" fill="#5aaaee"/><rect x="3" y="12" width="1" height="1" fill="#5aaaee"/><rect x="4" y="12" width="1" height="1" fill="#5aaaee"/><rect x="5" y="12" width="1" height="1"/><rect x="7" y="12" width="1" height="1"/><rect x="9" y="12" width="1" height="1" fill="#5aaaee"/><rect x="12" y="12" width="1" height="1"/><rect x="13" y="12" width="1" height="1"/><rect x="1" y="13" width="1" height="1"/><rect x="3" y="13" width="1" height="1"/><rect x="5" y="13" width="1" height="1"/><rect x="8" y="13" width="1" height="1"/><rect x="9" y="13" width="1" height="1"/><rect x="11" y="13" width="1" height="1"/><rect x="14" y="13" width="1" height="1" fill="#5aaaee"/><rect x="15" y="13" width="1" height="1"/><rect x="1" y="14" width="1" height="1"/><rect x="2" y="14" width="1" height="1" fill="#5aaaee"/><rect x="3" y="14" width="1" height="1" fill="#5aaaee"/><rect x="5" y="14" width="1" height="1"/><rect x="7" y="14" width="1" height="1"/><rect x="10" y="14" width="1" height="1"/><rect x="12" y="14" width="1" height="1"/><rect x="15" y="14" width="1" height="1"/><rect x="1" y="15" width="1" height="1" fill="#5aaaee"/><rect x="2" y="15" width="1" height="1"/><rect x="3" y="15" width="1" height="1"/><rect x="4" y="15" width="1" height="1"/><rect x="5" y="15" width="1" height="1"/><rect x="7" y="15" width="1" height="1"/><rect x="8" y="15" width="1" height="1" fill="#5aaaee"/><rect x="9" y="15" width="1" height="1" fill="#5aaaee"/><rect x="11" y="15" width="1" height="1"/><rect x="13" y="15" width="1" height="1" fill="#5aaaee"/><rect x="14" y="15" width="1" height="1" fill="#5aaaee"/><rect x="15" y="15" width="1" height="1"/></g></svg></div>
<div class="abs" style="left:657px;top:86.36px"><svg class="xml" width="16" height="19" viewBox="0 0 16 19"><path d="M0.5 0.5h12.5l2.5 2.5v15.5h-15z" fill="#fff" stroke="#6f98d4" stroke-width="1"/>
<path d="M0 0h13l3 3v3.8h-16z" fill="#4a7cc6"/><path d="M13 0v3h3z" fill="#fff"/><path d="M13.3 0.8v2.4h2.2" fill="none" stroke="#4a7cc6" stroke-width="0.9"/>
<text x="1.3" y="5.9" font-family="Liberation Sans" font-size="5.6" font-weight="700" fill="#f4f8ff" letter-spacing="-0.2">XML</text>
<path d="M7 10.5l-2 1.7 2 1.7M9.3 10.5l2 1.7-2 1.7" fill="none" stroke="#5f8ccf" stroke-width="1.3"/></svg></div>
<div class="abs reset" style="left:717.3px;top:90.16px;font-size:11.6px;line-height:14px">Reset</div>
<div class="abs" style="left:0;top:108.95px;width:793px;height:27.5px;background:#f5f6fa"></div>
<div class="cb" style="left:8.7px;top:115.78px"></div>
<div class="abs" style="left:38.8px;top:116.68px;font-size:11px;color:#1a1a1a;white-space:nowrap;line-height:14px">29</div>
<div class="abs" style="left:78px;top:116.68px;font-size:11px;color:#1a1a1a;white-space:nowrap;line-height:14px">IPC</div>
<div class="abs" style="left:142px;top:116.68px;font-size:11px;color:#1a1a1a;white-space:nowrap;line-height:14px">IPC-L26</div>
<div class="abs" style="left:270.5px;top:116.68px;font-size:11px;color:#1a1a1a;white-space:nowrap;line-height:14px">192.168.2.235</div>
<div class="abs" style="left:389px;top:116.68px;font-size:11px;color:#1a1a1a;white-space:nowrap;line-height:14px">a0:bd:1d:79:32:ef</div>
<div class="abs" style="left:508px;top:116.68px;font-size:11px;color:#1a1a1a;white-space:nowrap;line-height:14px">2.680.12JW004.0.T</div>
<div class="abs" style="left:634.5px;top:113.98px"><svg class="qr" width="17" height="17" viewBox="0 0 17 17"><rect width="17" height="17" fill="#fff"/><g fill="#777777" shape-rendering="crispEdges"><rect x="1" y="1" width="1" height="1"/><rect x="2" y="1" width="1" height="1"/><rect x="3" y="1" width="1" height="1"/><rect x="4" y="1" width="1" height="1"/><rect x="5" y="1" width="1" height="1"/><rect x="8" y="1" width="1" height="1"/><rect x="10" y="1" width="1" height="1"/><rect x="11" y="1" width="1" height="1"/><rect x="12" y="1" width="1" height="1"/><rect x="13" y="1" width="1" height="1"/><rect x="14" y="1" width="1" height="1"/><rect x="15" y="1" width="1" height="1" fill="#5aaaee"/><rect x="1" y="2" width="1" height="1"/><rect x="3" y="2" width="1" height="1"/><rect x="5" y="2" width="1" height="1"/><rect x="8" y="2" width="1" height="1"/><rect x="9" y="2" width="1" height="1"/><rect x="13" y="2" width="1" height="1" fill="#5aaaee"/><rect x="15" y="2" width="1" height="1"/><rect x="1" y="3" width="1" height="1"/><rect x="3" y="3" width="1" height="1"/><rect x="5" y="3" width="1" height="1"/><rect x="7" y="3" width="1" height="1"/><rect x="10" y="3" width="1" height="1"/><rect x="11" y="3" width="1" height="1" fill="#5aaaee"/><rect x="12" y="3" width="1" height="1" fill="#5aaaee"/><rect x="13" y="3" width="1" height="1" fill="#5aaaee"/><rect x="15" y="3" width="1" height="1"/><rect x="1" y="4" width="1" height="1"/><rect x="3" y="4" width="1" height="1"/><rect x="5" y="4" width="1" height="1"/><rect x="8" y="4" width="1" height="1"/><rect x="10" y="4" width="1" height="1"/><rect x="11" y="4" width="1" height="1" fill="#5aaaee"/><rect x="12" y="4" width="1" height="1" fill="#5aaaee"/><rect x="15" y="4" width="1" height="1"/><rect x="1" y="5" width="1" height="1"/><rect x="2" y="5" width="1" height="1"/><rect x="3" y="5" width="1" height="1"/><rect x="4" y="5" width="1" height="1"/><rect x="5" y="5" width="1" height="1"/><rect x="6" y="5" width="1" height="1" fill="#5aaaee"/><rect x="7" y="5" width="1" height="1" fill="#5aaaee"/><rect x="9" y="5" width="1" height="1" fill="#5aaaee"/><rect x="10" y="5" width="1" height="1"/><rect x="11" y="5" width="1" height="1"/><rect x="12" y="5" width="1" height="1"/><rect x="13" y="5" width="1" height="1"/><rect x="14" y="5" width="1" height="1"/><rect x="7" y="6" width="1" height="1"/><rect x="8" y="6" width="1" height="1" fill="#5aaaee"/><rect x="9" y="6" width="1" height="1" fill="#5aaaee"/><rect x="1" y="7" width="1" height="1"/><rect x="2" y="7" width="1" height="1"/><rect x="4" y="7" width="1" height="1"/><rect x="5" y="7" width="1" height="1" fill="#5aaaee"/><rect x="6" y="7" width="1" height="1"/><rect x="8" y="7" width="1" height="1"/><rect x="10" y="7" width="1" height="1"/><rect x="11" y="7" width="1" height="1"/><rect x="13" y="7" width="1" height="1"/><rect x="15" y="7" width="1" height="1"/><rect x="1" y="8" width="1" height="1"/><rect x="3" y="8" width="1" height="1" fill="#5aaaee"/><rect x="4" y="8" width="1" height="1" fill="#5aaaee"/><rect x="6" y="8" width="1" height="1"/><rect x="8" y="8" width="1" height="1" fill="#5aaaee"/><rect x="9" y="8" width="1" height="1"/><rect x="12" y="8" width="1" height="1" fill="#5aaaee"/><rect x="13" y="8" width="1" height="1"/><rect x="1" y="9" width="1" height="1" fill="#5aaaee"/><rect x="2" y="9" width="1" height="1"/><rect x="4" y="9" width="1" height="1"/><rect x="5" y="9" width="1" height="1"/><rect x="7" y="9" width="1" height="1"/><rect x="9" y="9" width="1" height="1"/><rect x="11" y="9" width="1" height="1"/><rect x="13" y="9" width="1" height="1"/><rect x="14" y="9" width="1" height="1"/><rect x="1" y="10" width="1" height="1"/><rect x="2" y="10" width="1" height="1" fill="#5aaaee"/><rect x="3" y="10" width="1" height="1" fill="#5aaaee"/><rect x="4" y="10" width="1" height="1"/><rect x="5" y="10" width="1" height="1"/><rect x="6" y="10" width="1" height="1"/><rect x="7" y="10" width="1" height="1"/><rect x="9" y="10" width="1" height="1" fill="#5aaaee"/><rect x="12" y="10" width="1" height="1"/><rect x="14" y="10" width="1" height="1"/><rect x="1" y="11" width="1" height="1"/><rect x="2" y="11" width="1" height="1" fill="#5aaaee"/><rect x="3" y="11" width="1" height="1"/><rect x="4" y="11" width="1" height="1"/><rect x="6" y="11" width="1" height="1"/><rect x="7" y="11" width="1" height="1"/><rect x="10" y="11" width="1" height="1"/><rect x="11" y="11" width="1" height="1"/><rect x="13" y="11" width="1" height="1"/><rect x="15" y="11" width="1" height="1"/><rect x="1" y="12" width="1" height="1"/><rect x="2" y="12" width="1" height="1" fill="#5aaaee"/><rect x="3" y="12" width="1" height="1" fill="#5aaaee"/><rect x="4" y="12" width="1" height="1" fill="#5aaaee"/><rect x="5" y="12" width="1" height="1"/><rect x="7" y="12" width="1" height="1"/><rect x="9" y="12" width="1" height="1" fill="#5aaaee"/><rect x="12" y="12" width="1" height="1"/><rect x="13" y="12" width="1" height="1"/><rect x="1" y="13" width="1" height="1"/><rect x="3" y="13" width="1" height="1"/><rect x="5" y="13" width="1" height="1"/><rect x="8" y="13" width="1" height="1"/><rect x="9" y="13" width="1" height="1"/><rect x="11" y="13" width="1" height="1"/><rect x="14" y="13" width="1" height="1" fill="#5aaaee"/><rect x="15" y="13" width="1" height="1"/><rect x="1" y="14" width="1" height="1"/><rect x="2" y="14" width="1" height="1" fill="#5aaaee"/><rect x="3" y="14" width="1" height="1" fill="#5aaaee"/><rect x="5" y="14" width="1" height="1"/><rect x="7" y="14" width="1" height="1"/><rect x="10" y="14" width="1" height="1"/><rect x="12" y="14" width="1" height="1"/><rect x="15" y="14" width="1" height="1"/><rect x="1" y="15" width="1" height="1" fill="#5aaaee"/><rect x="2" y="15" width="1" height="1"/><rect x="3" y="15" width="1" height="1"/><rect x="4" y="15" width="1" height="1"/><rect x="5" y="15" width="1" height="1"/><rect x="7" y="15" width="1" height="1"/><rect x="8" y="15" width="1" height="1" fill="#5aaaee"/><rect x="9" y="15" width="1" height="1" fill="#5aaaee"/><rect x="11" y="15" width="1" height="1"/><rect x="13" y="15" width="1" height="1" fill="#5aaaee"/><rect x="14" y="15" width="1" height="1" fill="#5aaaee"/><rect x="15" y="15" width="1" height="1"/></g></svg></div>
<div class="abs" style="left:657px;top:113.68px"><svg class="xml" width="16" height="19" viewBox="0 0 16 19"><path d="M0.5 0.5h12.5l2.5 2.5v15.5h-15z" fill="#fff" stroke="#6f98d4" stroke-width="1"/>
<path d="M0 0h13l3 3v3.8h-16z" fill="#4a7cc6"/><path d="M13 0v3h3z" fill="#fff"/><path d="M13.3 0.8v2.4h2.2" fill="none" stroke="#4a7cc6" stroke-width="0.9"/>
<text x="1.3" y="5.9" font-family="Liberation Sans" font-size="5.6" font-weight="700" fill="#f4f8ff" letter-spacing="-0.2">XML</text>
<path d="M7 10.5l-2 1.7 2 1.7M9.3 10.5l2 1.7-2 1.7" fill="none" stroke="#5f8ccf" stroke-width="1.3"/></svg></div>
<div class="abs reset" style="left:717.3px;top:117.48px;font-size:11.6px;line-height:14px">Reset</div>
<div class="abs" style="left:0;top:136.35px;width:793px;height:27.5px;background:#fafafb"></div>
<div class="cb" style="left:8.7px;top:143.11px"></div>
<div class="abs" style="left:38.8px;top:144.01px;font-size:11px;color:#1a1a1a;white-space:nowrap;line-height:14px">30</div>
<div class="abs" style="left:78px;top:144.01px;font-size:11px;color:#1a1a1a;white-space:nowrap;line-height:14px">IPC</div>
<div class="abs" style="left:142px;top:144.01px;font-size:11px;color:#1a1a1a;white-space:nowrap;line-height:14px">N88BR5V</div>
<div class="abs" style="left:270.5px;top:144.01px;font-size:11px;color:#1a1a1a;white-space:nowrap;line-height:14px">192.168.2.24</div>
<div class="abs" style="left:389px;top:144.01px;font-size:11px;color:#1a1a1a;white-space:nowrap;line-height:14px">6c:1c:71:da:51:aa</div>
<div class="abs" style="left:508px;top:144.01px;font-size:11px;color:#1a1a1a;white-space:nowrap;line-height:14px">3.000.0000000.1.R</div>
<div class="abs" style="left:634.5px;top:141.31px"><svg class="qr" width="17" height="17" viewBox="0 0 17 17"><rect width="17" height="17" fill="#fff"/><g fill="#777777" shape-rendering="crispEdges"><rect x="1" y="1" width="1" height="1"/><rect x="2" y="1" width="1" height="1"/><rect x="3" y="1" width="1" height="1"/><rect x="4" y="1" width="1" height="1"/><rect x="5" y="1" width="1" height="1"/><rect x="8" y="1" width="1" height="1"/><rect x="10" y="1" width="1" height="1"/><rect x="11" y="1" width="1" height="1"/><rect x="12" y="1" width="1" height="1"/><rect x="13" y="1" width="1" height="1"/><rect x="14" y="1" width="1" height="1"/><rect x="15" y="1" width="1" height="1" fill="#5aaaee"/><rect x="1" y="2" width="1" height="1"/><rect x="3" y="2" width="1" height="1"/><rect x="5" y="2" width="1" height="1"/><rect x="8" y="2" width="1" height="1"/><rect x="9" y="2" width="1" height="1"/><rect x="13" y="2" width="1" height="1" fill="#5aaaee"/><rect x="15" y="2" width="1" height="1"/><rect x="1" y="3" width="1" height="1"/><rect x="3" y="3" width="1" height="1"/><rect x="5" y="3" width="1" height="1"/><rect x="7" y="3" width="1" height="1"/><rect x="10" y="3" width="1" height="1"/><rect x="11" y="3" width="1" height="1" fill="#5aaaee"/><rect x="12" y="3" width="1" height="1" fill="#5aaaee"/><rect x="13" y="3" width="1" height="1" fill="#5aaaee"/><rect x="15" y="3" width="1" height="1"/><rect x="1" y="4" width="1" height="1"/><rect x="3" y="4" width="1" height="1"/><rect x="5" y="4" width="1" height="1"/><rect x="8" y="4" width="1" height="1"/><rect x="10" y="4" width="1" height="1"/><rect x="11" y="4" width="1" height="1" fill="#5aaaee"/><rect x="12" y="4" width="1" height="1" fill="#5aaaee"/><rect x="15" y="4" width="1" height="1"/><rect x="1" y="5" width="1" height="1"/><rect x="2" y="5" width="1" height="1"/><rect x="3" y="5" width="1" height="1"/><rect x="4" y="5" width="1" height="1"/><rect x="5" y="5" width="1" height="1"/><rect x="6" y="5" width="1" height="1" fill="#5aaaee"/><rect x="7" y="5" width="1" height="1" fill="#5aaaee"/><rect x="9" y="5" width="1" height="1" fill="#5aaaee"/><rect x="10" y="5" width="1" height="1"/><rect x="11" y="5" width="1" height="1"/><rect x="12" y="5" width="1" height="1"/><rect x="13" y="5" width="1" height="1"/><rect x="14" y="5" width="1" height="1"/><rect x="7" y="6" width="1" height="1"/><rect x="8" y="6" width="1" height="1" fill="#5aaaee"/><rect x="9" y="6" width="1" height="1" fill="#5aaaee"/><rect x="1" y="7" width="1" height="1"/><rect x="2" y="7" width="1" height="1"/><rect x="4" y="7" width="1" height="1"/><rect x="5" y="7" width="1" height="1" fill="#5aaaee"/><rect x="6" y="7" width="1" height="1"/><rect x="8" y="7" width="1" height="1"/><rect x="10" y="7" width="1" height="1"/><rect x="11" y="7" width="1" height="1"/><rect x="13" y="7" width="1" height="1"/><rect x="15" y="7" width="1" height="1"/><rect x="1" y="8" width="1" height="1"/><rect x="3" y="8" width="1" height="1" fill="#5aaaee"/><rect x="4" y="8" width="1" height="1" fill="#5aaaee"/><rect x="6" y="8" width="1" height="1"/><rect x="8" y="8" width="1" height="1" fill="#5aaaee"/><rect x="9" y="8" width="1" height="1"/><rect x="12" y="8" width="1" height="1" fill="#5aaaee"/><rect x="13" y="8" width="1" height="1"/><rect x="1" y="9" width="1" height="1" fill="#5aaaee"/><rect x="2" y="9" width="1" height="1"/><rect x="4" y="9" width="1" height="1"/><rect x="5" y="9" width="1" height="1"/><rect x="7" y="9" width="1" height="1"/><rect x="9" y="9" width="1" height="1"/><rect x="11" y="9" width="1" height="1"/><rect x="13" y="9" width="1" height="1"/><rect x="14" y="9" width="1" height="1"/><rect x="1" y="10" width="1" height="1"/><rect x="2" y="10" width="1" height="1" fill="#5aaaee"/><rect x="3" y="10" width="1" height="1" fill="#5aaaee"/><rect x="4" y="10" width="1" height="1"/><rect x="5" y="10" width="1" height="1"/><rect x="6" y="10" width="1" height="1"/><rect x="7" y="10" width="1" height="1"/><rect x="9" y="10" width="1" height="1" fill="#5aaaee"/><rect x="12" y="10" width="1" height="1"/><rect x="14" y="10" width="1" height="1"/><rect x="1" y="11" width="1" height="1"/><rect x="2" y="11" width="1" height="1" fill="#5aaaee"/><rect x="3" y="11" width="1" height="1"/><rect x="4" y="11" width="1" height="1"/><rect x="6" y="11" width="1" height="1"/><rect x="7" y="11" width="1" height="1"/><rect x="10" y="11" width="1" height="1"/><rect x="11" y="11" width="1" height="1"/><rect x="13" y="11" width="1" height="1"/><rect x="15" y="11" width="1" height="1"/><rect x="1" y="12" width="1" height="1"/><rect x="2" y="12" width="1" height="1" fill="#5aaaee"/><rect x="3" y="12" width="1" height="1" fill="#5aaaee"/><rect x="4" y="12" width="1" height="1" fill="#5aaaee"/><rect x="5" y="12" width="1" height="1"/><rect x="7" y="12" width="1" height="1"/><rect x="9" y="12" width="1" height="1" fill="#5aaaee"/><rect x="12" y="12" width="1" height="1"/><rect x="13" y="12" width="1" height="1"/><rect x="1" y="13" width="1" height="1"/><rect x="3" y="13" width="1" height="1"/><rect x="5" y="13" width="1" height="1"/><rect x="8" y="13" width="1" height="1"/><rect x="9" y="13" width="1" height="1"/><rect x="11" y="13" width="1" height="1"/><rect x="14" y="13" width="1" height="1" fill="#5aaaee"/><rect x="15" y="13" width="1" height="1"/><rect x="1" y="14" width="1" height="1"/><rect x="2" y="14" width="1" height="1" fill="#5aaaee"/><rect x="3" y="14" width="1" height="1" fill="#5aaaee"/><rect x="5" y="14" width="1" height="1"/><rect x="7" y="14" width="1" height="1"/><rect x="10" y="14" width="1" height="1"/><rect x="12" y="14" width="1" height="1"/><rect x="15" y="14" width="1" height="1"/><rect x="1" y="15" width="1" height="1" fill="#5aaaee"/><rect x="2" y="15" width="1" height="1"/><rect x="3" y="15" width="1" height="1"/><rect x="4" y="15" width="1" height="1"/><rect x="5" y="15" width="1" height="1"/><rect x="7" y="15" width="1" height="1"/><rect x="8" y="15" width="1" height="1" fill="#5aaaee"/><rect x="9" y="15" width="1" height="1" fill="#5aaaee"/><rect x="11" y="15" width="1" height="1"/><rect x="13" y="15" width="1" height="1" fill="#5aaaee"/><rect x="14" y="15" width="1" height="1" fill="#5aaaee"/><rect x="15" y="15" width="1" height="1"/></g></svg></div>
<div class="abs" style="left:657px;top:141.01px"><svg class="xml" width="16" height="19" viewBox="0 0 16 19"><path d="M0.5 0.5h12.5l2.5 2.5v15.5h-15z" fill="#fff" stroke="#6f98d4" stroke-width="1"/>
<path d="M0 0h13l3 3v3.8h-16z" fill="#4a7cc6"/><path d="M13 0v3h3z" fill="#fff"/><path d="M13.3 0.8v2.4h2.2" fill="none" stroke="#4a7cc6" stroke-width="0.9"/>
<text x="1.3" y="5.9" font-family="Liberation Sans" font-size="5.6" font-weight="700" fill="#f4f8ff" letter-spacing="-0.2">XML</text>
<path d="M7 10.5l-2 1.7 2 1.7M9.3 10.5l2 1.7-2 1.7" fill="none" stroke="#5f8ccf" stroke-width="1.3"/></svg></div>
<div class="abs reset" style="left:717.3px;top:144.81px;font-size:11.6px;line-height:14px">Reset</div>
<div class="abs" style="left:0;top:163.75px;width:793px;height:27.5px;background:#f5f6fa"></div>
<div class="cb" style="left:8.7px;top:170.45px"></div>
<div class="abs" style="left:38.8px;top:171.34px;font-size:11px;color:#1a1a1a;white-space:nowrap;line-height:14px">31</div>
<div class="abs" style="left:78px;top:171.34px;font-size:11px;color:#1a1a1a;white-space:nowrap;line-height:14px">IPC</div>
<div class="abs" style="left:142px;top:171.34px;font-size:11px;color:#1a1a1a;white-space:nowrap;line-height:14px">IPC-PFW8601-A180</div>
<div class="abs" style="left:270.5px;top:171.34px;font-size:11px;color:#1a1a1a;white-space:nowrap;line-height:14px">192.168.2.126</div>
<div class="abs" style="left:389px;top:171.34px;font-size:11px;color:#1a1a1a;white-space:nowrap;line-height:14px">3c:ef:8c:fa:0d:22</div>
<div class="abs" style="left:508px;top:171.34px;font-size:11px;color:#1a1a1a;white-space:nowrap;line-height:14px">2.622.0000000.1.R</div>
<div class="abs" style="left:634.5px;top:168.65px"><svg class="qr" width="17" height="17" viewBox="0 0 17 17"><rect width="17" height="17" fill="#fff"/><g fill="#777777" shape-rendering="crispEdges"><rect x="1" y="1" width="1" height="1"/><rect x="2" y="1" width="1" height="1"/><rect x="3" y="1" width="1" height="1"/><rect x="4" y="1" width="1" height="1"/><rect x="5" y="1" width="1" height="1"/><rect x="8" y="1" width="1" height="1"/><rect x="10" y="1" width="1" height="1"/><rect x="11" y="1" width="1" height="1"/><rect x="12" y="1" width="1" height="1"/><rect x="13" y="1" width="1" height="1"/><rect x="14" y="1" width="1" height="1"/><rect x="15" y="1" width="1" height="1" fill="#5aaaee"/><rect x="1" y="2" width="1" height="1"/><rect x="3" y="2" width="1" height="1"/><rect x="5" y="2" width="1" height="1"/><rect x="8" y="2" width="1" height="1"/><rect x="9" y="2" width="1" height="1"/><rect x="13" y="2" width="1" height="1" fill="#5aaaee"/><rect x="15" y="2" width="1" height="1"/><rect x="1" y="3" width="1" height="1"/><rect x="3" y="3" width="1" height="1"/><rect x="5" y="3" width="1" height="1"/><rect x="7" y="3" width="1" height="1"/><rect x="10" y="3" width="1" height="1"/><rect x="11" y="3" width="1" height="1" fill="#5aaaee"/><rect x="12" y="3" width="1" height="1" fill="#5aaaee"/><rect x="13" y="3" width="1" height="1" fill="#5aaaee"/><rect x="15" y="3" width="1" height="1"/><rect x="1" y="4" width="1" height="1"/><rect x="3" y="4" width="1" height="1"/><rect x="5" y="4" width="1" height="1"/><rect x="8" y="4" width="1" height="1"/><rect x="10" y="4" width="1" height="1"/><rect x="11" y="4" width="1" height="1" fill="#5aaaee"/><rect x="12" y="4" width="1" height="1" fill="#5aaaee"/><rect x="15" y="4" width="1" height="1"/><rect x="1" y="5" width="1" height="1"/><rect x="2" y="5" width="1" height="1"/><rect x="3" y="5" width="1" height="1"/><rect x="4" y="5" width="1" height="1"/><rect x="5" y="5" width="1" height="1"/><rect x="6" y="5" width="1" height="1" fill="#5aaaee"/><rect x="7" y="5" width="1" height="1" fill="#5aaaee"/><rect x="9" y="5" width="1" height="1" fill="#5aaaee"/><rect x="10" y="5" width="1" height="1"/><rect x="11" y="5" width="1" height="1"/><rect x="12" y="5" width="1" height="1"/><rect x="13" y="5" width="1" height="1"/><rect x="14" y="5" width="1" height="1"/><rect x="7" y="6" width="1" height="1"/><rect x="8" y="6" width="1" height="1" fill="#5aaaee"/><rect x="9" y="6" width="1" height="1" fill="#5aaaee"/><rect x="1" y="7" width="1" height="1"/><rect x="2" y="7" width="1" height="1"/><rect x="4" y="7" width="1" height="1"/><rect x="5" y="7" width="1" height="1" fill="#5aaaee"/><rect x="6" y="7" width="1" height="1"/><rect x="8" y="7" width="1" height="1"/><rect x="10" y="7" width="1" height="1"/><rect x="11" y="7" width="1" height="1"/><rect x="13" y="7" width="1" height="1"/><rect x="15" y="7" width="1" height="1"/><rect x="1" y="8" width="1" height="1"/><rect x="3" y="8" width="1" height="1" fill="#5aaaee"/><rect x="4" y="8" width="1" height="1" fill="#5aaaee"/><rect x="6" y="8" width="1" height="1"/><rect x="8" y="8" width="1" height="1" fill="#5aaaee"/><rect x="9" y="8" width="1" height="1"/><rect x="12" y="8" width="1" height="1" fill="#5aaaee"/><rect x="13" y="8" width="1" height="1"/><rect x="1" y="9" width="1" height="1" fill="#5aaaee"/><rect x="2" y="9" width="1" height="1"/><rect x="4" y="9" width="1" height="1"/><rect x="5" y="9" width="1" height="1"/><rect x="7" y="9" width="1" height="1"/><rect x="9" y="9" width="1" height="1"/><rect x="11" y="9" width="1" height="1"/><rect x="13" y="9" width="1" height="1"/><rect x="14" y="9" width="1" height="1"/><rect x="1" y="10" width="1" height="1"/><rect x="2" y="10" width="1" height="1" fill="#5aaaee"/><rect x="3" y="10" width="1" height="1" fill="#5aaaee"/><rect x="4" y="10" width="1" height="1"/><rect x="5" y="10" width="1" height="1"/><rect x="6" y="10" width="1" height="1"/><rect x="7" y="10" width="1" height="1"/><rect x="9" y="10" width="1" height="1" fill="#5aaaee"/><rect x="12" y="10" width="1" height="1"/><rect x="14" y="10" width="1" height="1"/><rect x="1" y="11" width="1" height="1"/><rect x="2" y="11" width="1" height="1" fill="#5aaaee"/><rect x="3" y="11" width="1" height="1"/><rect x="4" y="11" width="1" height="1"/><rect x="6" y="11" width="1" height="1"/><rect x="7" y="11" width="1" height="1"/><rect x="10" y="11" width="1" height="1"/><rect x="11" y="11" width="1" height="1"/><rect x="13" y="11" width="1" height="1"/><rect x="15" y="11" width="1" height="1"/><rect x="1" y="12" width="1" height="1"/><rect x="2" y="12" width="1" height="1" fill="#5aaaee"/><rect x="3" y="12" width="1" height="1" fill="#5aaaee"/><rect x="4" y="12" width="1" height="1" fill="#5aaaee"/><rect x="5" y="12" width="1" height="1"/><rect x="7" y="12" width="1" height="1"/><rect x="9" y="12" width="1" height="1" fill="#5aaaee"/><rect x="12" y="12" width="1" height="1"/><rect x="13" y="12" width="1" height="1"/><rect x="1" y="13" width="1" height="1"/><rect x="3" y="13" width="1" height="1"/><rect x="5" y="13" width="1" height="1"/><rect x="8" y="13" width="1" height="1"/><rect x="9" y="13" width="1" height="1"/><rect x="11" y="13" width="1" height="1"/><rect x="14" y="13" width="1" height="1" fill="#5aaaee"/><rect x="15" y="13" width="1" height="1"/><rect x="1" y="14" width="1" height="1"/><rect x="2" y="14" width="1" height="1" fill="#5aaaee"/><rect x="3" y="14" width="1" height="1" fill="#5aaaee"/><rect x="5" y="14" width="1" height="1"/><rect x="7" y="14" width="1" height="1"/><rect x="10" y="14" width="1" height="1"/><rect x="12" y="14" width="1" height="1"/><rect x="15" y="14" width="1" height="1"/><rect x="1" y="15" width="1" height="1" fill="#5aaaee"/><rect x="2" y="15" width="1" height="1"/><rect x="3" y="15" width="1" height="1"/><rect x="4" y="15" width="1" height="1"/><rect x="5" y="15" width="1" height="1"/><rect x="7" y="15" width="1" height="1"/><rect x="8" y="15" width="1" height="1" fill="#5aaaee"/><rect x="9" y="15" width="1" height="1" fill="#5aaaee"/><rect x="11" y="15" width="1" height="1"/><rect x="13" y="15" width="1" height="1" fill="#5aaaee"/><rect x="14" y="15" width="1" height="1" fill="#5aaaee"/><rect x="15" y="15" width="1" height="1"/></g></svg></div>
<div class="abs" style="left:657px;top:168.34px"><svg class="xml" width="16" height="19" viewBox="0 0 16 19"><path d="M0.5 0.5h12.5l2.5 2.5v15.5h-15z" fill="#fff" stroke="#6f98d4" stroke-width="1"/>
<path d="M0 0h13l3 3v3.8h-16z" fill="#4a7cc6"/><path d="M13 0v3h3z" fill="#fff"/><path d="M13.3 0.8v2.4h2.2" fill="none" stroke="#4a7cc6" stroke-width="0.9"/>
<text x="1.3" y="5.9" font-family="Liberation Sans" font-size="5.6" font-weight="700" fill="#f4f8ff" letter-spacing="-0.2">XML</text>
<path d="M7 10.5l-2 1.7 2 1.7M9.3 10.5l2 1.7-2 1.7" fill="none" stroke="#5f8ccf" stroke-width="1.3"/></svg></div>
<div class="abs reset" style="left:717.3px;top:172.15px;font-size:11.6px;line-height:14px">Reset</div>
<div class="abs" style="left:0;top:191.15px;width:793px;height:27.5px;background:#fafafb"></div>
<div class="cb" style="left:8.7px;top:197.78px"></div>
<div class="abs" style="left:38.8px;top:198.67px;font-size:11px;color:#1a1a1a;white-space:nowrap;line-height:14px">32</div>
<div class="abs" style="left:78px;top:198.67px;font-size:11px;color:#1a1a1a;white-space:nowrap;line-height:14px">IPC</div>
<div class="abs" style="left:142px;top:198.67px;font-size:11px;color:#1a1a1a;white-space:nowrap;line-height:14px">N42BJ62</div>
<div class="abs" style="left:270.5px;top:198.67px;font-size:11px;color:#1a1a1a;white-space:nowrap;line-height:14px">192.168.2.218</div>
<div class="abs" style="left:389px;top:198.67px;font-size:11px;color:#1a1a1a;white-space:nowrap;line-height:14px">08:ed:ed:6a:df:5e</div>
<div class="abs" style="left:508px;top:198.67px;font-size:11px;color:#1a1a1a;white-space:nowrap;line-height:14px">2.800.0000000.13.R</div>
<div class="abs" style="left:634.5px;top:195.97px"><svg class="qr" width="17" height="17" viewBox="0 0 17 17"><rect width="17" height="17" fill="#fff"/><g fill="#777777" shape-rendering="crispEdges"><rect x="1" y="1" width="1" height="1"/><rect x="2" y="1" width="1" height="1"/><rect x="3" y="1" width="1" height="1"/><rect x="4" y="1" width="1" height="1"/><rect x="5" y="1" width="1" height="1"/><rect x="8" y="1" width="1" height="1"/><rect x="10" y="1" width="1" height="1"/><rect x="11" y="1" width="1" height="1"/><rect x="12" y="1" width="1" height="1"/><rect x="13" y="1" width="1" height="1"/><rect x="14" y="1" width="1" height="1"/><rect x="15" y="1" width="1" height="1" fill="#5aaaee"/><rect x="1" y="2" width="1" height="1"/><rect x="3" y="2" width="1" height="1"/><rect x="5" y="2" width="1" height="1"/><rect x="8" y="2" width="1" height="1"/><rect x="9" y="2" width="1" height="1"/><rect x="13" y="2" width="1" height="1" fill="#5aaaee"/><rect x="15" y="2" width="1" height="1"/><rect x="1" y="3" width="1" height="1"/><rect x="3" y="3" width="1" height="1"/><rect x="5" y="3" width="1" height="1"/><rect x="7" y="3" width="1" height="1"/><rect x="10" y="3" width="1" height="1"/><rect x="11" y="3" width="1" height="1" fill="#5aaaee"/><rect x="12" y="3" width="1" height="1" fill="#5aaaee"/><rect x="13" y="3" width="1" height="1" fill="#5aaaee"/><rect x="15" y="3" width="1" height="1"/><rect x="1" y="4" width="1" height="1"/><rect x="3" y="4" width="1" height="1"/><rect x="5" y="4" width="1" height="1"/><rect x="8" y="4" width="1" height="1"/><rect x="10" y="4" width="1" height="1"/><rect x="11" y="4" width="1" height="1" fill="#5aaaee"/><rect x="12" y="4" width="1" height="1" fill="#5aaaee"/><rect x="15" y="4" width="1" height="1"/><rect x="1" y="5" width="1" height="1"/><rect x="2" y="5" width="1" height="1"/><rect x="3" y="5" width="1" height="1"/><rect x="4" y="5" width="1" height="1"/><rect x="5" y="5" width="1" height="1"/><rect x="6" y="5" width="1" height="1" fill="#5aaaee"/><rect x="7" y="5" width="1" height="1" fill="#5aaaee"/><rect x="9" y="5" width="1" height="1" fill="#5aaaee"/><rect x="10" y="5" width="1" height="1"/><rect x="11" y="5" width="1" height="1"/><rect x="12" y="5" width="1" height="1"/><rect x="13" y="5" width="1" height="1"/><rect x="14" y="5" width="1" height="1"/><rect x="7" y="6" width="1" height="1"/><rect x="8" y="6" width="1" height="1" fill="#5aaaee"/><rect x="9" y="6" width="1" height="1" fill="#5aaaee"/><rect x="1" y="7" width="1" height="1"/><rect x="2" y="7" width="1" height="1"/><rect x="4" y="7" width="1" height="1"/><rect x="5" y="7" width="1" height="1" fill="#5aaaee"/><rect x="6" y="7" width="1" height="1"/><rect x="8" y="7" width="1" height="1"/><rect x="10" y="7" width="1" height="1"/><rect x="11" y="7" width="1" height="1"/><rect x="13" y="7" width="1" height="1"/><rect x="15" y="7" width="1" height="1"/><rect x="1" y="8" width="1" height="1"/><rect x="3" y="8" width="1" height="1" fill="#5aaaee"/><rect x="4" y="8" width="1" height="1" fill="#5aaaee"/><rect x="6" y="8" width="1" height="1"/><rect x="8" y="8" width="1" height="1" fill="#5aaaee"/><rect x="9" y="8" width="1" height="1"/><rect x="12" y="8" width="1" height="1" fill="#5aaaee"/><rect x="13" y="8" width="1" height="1"/><rect x="1" y="9" width="1" height="1" fill="#5aaaee"/><rect x="2" y="9" width="1" height="1"/><rect x="4" y="9" width="1" height="1"/><rect x="5" y="9" width="1" height="1"/><rect x="7" y="9" width="1" height="1"/><rect x="9" y="9" width="1" height="1"/><rect x="11" y="9" width="1" height="1"/><rect x="13" y="9" width="1" height="1"/><rect x="14" y="9" width="1" height="1"/><rect x="1" y="10" width="1" height="1"/><rect x="2" y="10" width="1" height="1" fill="#5aaaee"/><rect x="3" y="10" width="1" height="1" fill="#5aaaee"/><rect x="4" y="10" width="1" height="1"/><rect x="5" y="10" width="1" height="1"/><rect x="6" y="10" width="1" height="1"/><rect x="7" y="10" width="1" height="1"/><rect x="9" y="10" width="1" height="1" fill="#5aaaee"/><rect x="12" y="10" width="1" height="1"/><rect x="14" y="10" width="1" height="1"/><rect x="1" y="11" width="1" height="1"/><rect x="2" y="11" width="1" height="1" fill="#5aaaee"/><rect x="3" y="11" width="1" height="1"/><rect x="4" y="11" width="1" height="1"/><rect x="6" y="11" width="1" height="1"/><rect x="7" y="11" width="1" height="1"/><rect x="10" y="11" width="1" height="1"/><rect x="11" y="11" width="1" height="1"/><rect x="13" y="11" width="1" height="1"/><rect x="15" y="11" width="1" height="1"/><rect x="1" y="12" width="1" height="1"/><rect x="2" y="12" width="1" height="1" fill="#5aaaee"/><rect x="3" y="12" width="1" height="1" fill="#5aaaee"/><rect x="4" y="12" width="1" height="1" fill="#5aaaee"/><rect x="5" y="12" width="1" height="1"/><rect x="7" y="12" width="1" height="1"/><rect x="9" y="12" width="1" height="1" fill="#5aaaee"/><rect x="12" y="12" width="1" height="1"/><rect x="13" y="12" width="1" height="1"/><rect x="1" y="13" width="1" height="1"/><rect x="3" y="13" width="1" height="1"/><rect x="5" y="13" width="1" height="1"/><rect x="8" y="13" width="1" height="1"/><rect x="9" y="13" width="1" height="1"/><rect x="11" y="13" width="1" height="1"/><rect x="14" y="13" width="1" height="1" fill="#5aaaee"/><rect x="15" y="13" width="1" height="1"/><rect x="1" y="14" width="1" height="1"/><rect x="2" y="14" width="1" height="1" fill="#5aaaee"/><rect x="3" y="14" width="1" height="1" fill="#5aaaee"/><rect x="5" y="14" width="1" height="1"/><rect x="7" y="14" width="1" height="1"/><rect x="10" y="14" width="1" height="1"/><rect x="12" y="14" width="1" height="1"/><rect x="15" y="14" width="1" height="1"/><rect x="1" y="15" width="1" height="1" fill="#5aaaee"/><rect x="2" y="15" width="1" height="1"/><rect x="3" y="15" width="1" height="1"/><rect x="4" y="15" width="1" height="1"/><rect x="5" y="15" width="1" height="1"/><rect x="7" y="15" width="1" height="1"/><rect x="8" y="15" width="1" height="1" fill="#5aaaee"/><rect x="9" y="15" width="1" height="1" fill="#5aaaee"/><rect x="11" y="15" width="1" height="1"/><rect x="13" y="15" width="1" height="1" fill="#5aaaee"/><rect x="14" y="15" width="1" height="1" fill="#5aaaee"/><rect x="15" y="15" width="1" height="1"/></g></svg></div>
<div class="abs" style="left:657px;top:195.67px"><svg class="xml" width="16" height="19" viewBox="0 0 16 19"><path d="M0.5 0.5h12.5l2.5 2.5v15.5h-15z" fill="#fff" stroke="#6f98d4" stroke-width="1"/>
<path d="M0 0h13l3 3v3.8h-16z" fill="#4a7cc6"/><path d="M13 0v3h3z" fill="#fff"/><path d="M13.3 0.8v2.4h2.2" fill="none" stroke="#4a7cc6" stroke-width="0.9"/>
<text x="1.3" y="5.9" font-family="Liberation Sans" font-size="5.6" font-weight="700" fill="#f4f8ff" letter-spacing="-0.2">XML</text>
<path d="M7 10.5l-2 1.7 2 1.7M9.3 10.5l2 1.7-2 1.7" fill="none" stroke="#5f8ccf" stroke-width="1.3"/></svg></div>
<div class="abs reset" style="left:717.3px;top:199.47px;font-size:11.6px;line-height:14px">Reset</div>
<div class="abs" style="left:0;top:218.55px;width:793px;height:27.5px;background:#f5f6fa"></div>
<div class="cb" style="left:8.7px;top:225.10px"></div>
<div class="abs" style="left:38.8px;top:226.00px;font-size:11px;color:#1a1a1a;white-space:nowrap;line-height:14px">33</div>
<div class="abs" style="left:78px;top:226.00px;font-size:11px;color:#1a1a1a;white-space:nowrap;line-height:14px">IPC</div>
<div class="abs" style="left:142px;top:226.00px;font-size:11px;color:#1a1a1a;white-space:nowrap;line-height:14px">N55CS5</div>
<div class="abs" style="left:270.5px;top:226.00px;font-size:11px;color:#1a1a1a;white-space:nowrap;line-height:14px">192.168.2.212</div>
<div class="abs" style="left:389px;top:226.00px;font-size:11px;color:#1a1a1a;white-space:nowrap;line-height:14px">bc:32:5f:28:b4:5b</div>
<div class="abs" style="left:508px;top:226.00px;font-size:11px;color:#1a1a1a;white-space:nowrap;line-height:14px">2.800.0000000.28.R</div>
<div class="abs" style="left:634.5px;top:223.30px"><svg class="qr" width="17" height="17" viewBox="0 0 17 17"><rect width="17" height="17" fill="#fff"/><g fill="#777777" shape-rendering="crispEdges"><rect x="1" y="1" width="1" height="1"/><rect x="2" y="1" width="1" height="1"/><rect x="3" y="1" width="1" height="1"/><rect x="4" y="1" width="1" height="1"/><rect x="5" y="1" width="1" height="1"/><rect x="8" y="1" width="1" height="1"/><rect x="10" y="1" width="1" height="1"/><rect x="11" y="1" width="1" height="1"/><rect x="12" y="1" width="1" height="1"/><rect x="13" y="1" width="1" height="1"/><rect x="14" y="1" width="1" height="1"/><rect x="15" y="1" width="1" height="1" fill="#5aaaee"/><rect x="1" y="2" width="1" height="1"/><rect x="3" y="2" width="1" height="1"/><rect x="5" y="2" width="1" height="1"/><rect x="8" y="2" width="1" height="1"/><rect x="9" y="2" width="1" height="1"/><rect x="13" y="2" width="1" height="1" fill="#5aaaee"/><rect x="15" y="2" width="1" height="1"/><rect x="1" y="3" width="1" height="1"/><rect x="3" y="3" width="1" height="1"/><rect x="5" y="3" width="1" height="1"/><rect x="7" y="3" width="1" height="1"/><rect x="10" y="3" width="1" height="1"/><rect x="11" y="3" width="1" height="1" fill="#5aaaee"/><rect x="12" y="3" width="1" height="1" fill="#5aaaee"/><rect x="13" y="3" width="1" height="1" fill="#5aaaee"/><rect x="15" y="3" width="1" height="1"/><rect x="1" y="4" width="1" height="1"/><rect x="3" y="4" width="1" height="1"/><rect x="5" y="4" width="1" height="1"/><rect x="8" y="4" width="1" height="1"/><rect x="10" y="4" width="1" height="1"/><rect x="11" y="4" width="1" height="1" fill="#5aaaee"/><rect x="12" y="4" width="1" height="1" fill="#5aaaee"/><rect x="15" y="4" width="1" height="1"/><rect x="1" y="5" width="1" height="1"/><rect x="2" y="5" width="1" height="1"/><rect x="3" y="5" width="1" height="1"/><rect x="4" y="5" width="1" height="1"/><rect x="5" y="5" width="1" height="1"/><rect x="6" y="5" width="1" height="1" fill="#5aaaee"/><rect x="7" y="5" width="1" height="1" fill="#5aaaee"/><rect x="9" y="5" width="1" height="1" fill="#5aaaee"/><rect x="10" y="5" width="1" height="1"/><rect x="11" y="5" width="1" height="1"/><rect x="12" y="5" width="1" height="1"/><rect x="13" y="5" width="1" height="1"/><rect x="14" y="5" width="1" height="1"/><rect x="7" y="6" width="1" height="1"/><rect x="8" y="6" width="1" height="1" fill="#5aaaee"/><rect x="9" y="6" width="1" height="1" fill="#5aaaee"/><rect x="1" y="7" width="1" height="1"/><rect x="2" y="7" width="1" height="1"/><rect x="4" y="7" width="1" height="1"/><rect x="5" y="7" width="1" height="1" fill="#5aaaee"/><rect x="6" y="7" width="1" height="1"/><rect x="8" y="7" width="1" height="1"/><rect x="10" y="7" width="1" height="1"/><rect x="11" y="7" width="1" height="1"/><rect x="13" y="7" width="1" height="1"/><rect x="15" y="7" width="1" height="1"/><rect x="1" y="8" width="1" height="1"/><rect x="3" y="8" width="1" height="1" fill="#5aaaee"/><rect x="4" y="8" width="1" height="1" fill="#5aaaee"/><rect x="6" y="8" width="1" height="1"/><rect x="8" y="8" width="1" height="1" fill="#5aaaee"/><rect x="9" y="8" width="1" height="1"/><rect x="12" y="8" width="1" height="1" fill="#5aaaee"/><rect x="13" y="8" width="1" height="1"/><rect x="1" y="9" width="1" height="1" fill="#5aaaee"/><rect x="2" y="9" width="1" height="1"/><rect x="4" y="9" width="1" height="1"/><rect x="5" y="9" width="1" height="1"/><rect x="7" y="9" width="1" height="1"/><rect x="9" y="9" width="1" height="1"/><rect x="11" y="9" width="1" height="1"/><rect x="13" y="9" width="1" height="1"/><rect x="14" y="9" width="1" height="1"/><rect x="1" y="10" width="1" height="1"/><rect x="2" y="10" width="1" height="1" fill="#5aaaee"/><rect x="3" y="10" width="1" height="1" fill="#5aaaee"/><rect x="4" y="10" width="1" height="1"/><rect x="5" y="10" width="1" height="1"/><rect x="6" y="10" width="1" height="1"/><rect x="7" y="10" width="1" height="1"/><rect x="9" y="10" width="1" height="1" fill="#5aaaee"/><rect x="12" y="10" width="1" height="1"/><rect x="14" y="10" width="1" height="1"/><rect x="1" y="11" width="1" height="1"/><rect x="2" y="11" width="1" height="1" fill="#5aaaee"/><rect x="3" y="11" width="1" height="1"/><rect x="4" y="11" width="1" height="1"/><rect x="6" y="11" width="1" height="1"/><rect x="7" y="11" width="1" height="1"/><rect x="10" y="11" width="1" height="1"/><rect x="11" y="11" width="1" height="1"/><rect x="13" y="11" width="1" height="1"/><rect x="15" y="11" width="1" height="1"/><rect x="1" y="12" width="1" height="1"/><rect x="2" y="12" width="1" height="1" fill="#5aaaee"/><rect x="3" y="12" width="1" height="1" fill="#5aaaee"/><rect x="4" y="12" width="1" height="1" fill="#5aaaee"/><rect x="5" y="12" width="1" height="1"/><rect x="7" y="12" width="1" height="1"/><rect x="9" y="12" width="1" height="1" fill="#5aaaee"/><rect x="12" y="12" width="1" height="1"/><rect x="13" y="12" width="1" height="1"/><rect x="1" y="13" width="1" height="1"/><rect x="3" y="13" width="1" height="1"/><rect x="5" y="13" width="1" height="1"/><rect x="8" y="13" width="1" height="1"/><rect x="9" y="13" width="1" height="1"/><rect x="11" y="13" width="1" height="1"/><rect x="14" y="13" width="1" height="1" fill="#5aaaee"/><rect x="15" y="13" width="1" height="1"/><rect x="1" y="14" width="1" height="1"/><rect x="2" y="14" width="1" height="1" fill="#5aaaee"/><rect x="3" y="14" width="1" height="1" fill="#5aaaee"/><rect x="5" y="14" width="1" height="1"/><rect x="7" y="14" width="1" height="1"/><rect x="10" y="14" width="1" height="1"/><rect x="12" y="14" width="1" height="1"/><rect x="15" y="14" width="1" height="1"/><rect x="1" y="15" width="1" height="1" fill="#5aaaee"/><rect x="2" y="15" width="1" height="1"/><rect x="3" y="15" width="1" height="1"/><rect x="4" y="15" width="1" height="1"/><rect x="5" y="15" width="1" height="1"/><rect x="7" y="15" width="1" height="1"/><rect x="8" y="15" width="1" height="1" fill="#5aaaee"/><rect x="9" y="15" width="1" height="1" fill="#5aaaee"/><rect x="11" y="15" width="1" height="1"/><rect x="13" y="15" width="1" height="1" fill="#5aaaee"/><rect x="14" y="15" width="1" height="1" fill="#5aaaee"/><rect x="15" y="15" width="1" height="1"/></g></svg></div>
<div class="abs" style="left:657px;top:223.00px"><svg class="xml" width="16" height="19" viewBox="0 0 16 19"><path d="M0.5 0.5h12.5l2.5 2.5v15.5h-15z" fill="#fff" stroke="#6f98d4" stroke-width="1"/>
<path d="M0 0h13l3 3v3.8h-16z" fill="#4a7cc6"/><path d="M13 0v3h3z" fill="#fff"/><path d="M13.3 0.8v2.4h2.2" fill="none" stroke="#4a7cc6" stroke-width="0.9"/>
<text x="1.3" y="5.9" font-family="Liberation Sans" font-size="5.6" font-weight="700" fill="#f4f8ff" letter-spacing="-0.2">XML</text>
<path d="M7 10.5l-2 1.7 2 1.7M9.3 10.5l2 1.7-2 1.7" fill="none" stroke="#5f8ccf" stroke-width="1.3"/></svg></div>
<div class="abs reset" style="left:717.3px;top:226.80px;font-size:11.6px;line-height:14px">Reset</div>
<div class="abs" style="left:0;top:245.95px;width:793px;height:27.5px;background:#fafafb"></div>
<div class="cb" style="left:8.7px;top:252.44px"></div>
<div class="abs" style="left:38.8px;top:253.33px;font-size:11px;color:#1a1a1a;white-space:nowrap;line-height:14px">34</div>
<div class="abs" style="left:78px;top:253.33px;font-size:11px;color:#1a1a1a;white-space:nowrap;line-height:14px">IPC</div>
<div class="abs" style="left:142px;top:253.33px;font-size:11px;color:#1a1a1a;white-space:nowrap;line-height:14px">N55DY82</div>
<div class="abs" style="left:270.5px;top:253.33px;font-size:11px;color:#1a1a1a;white-space:nowrap;line-height:14px">192.168.2.179</div>
<div class="abs" style="left:389px;top:253.33px;font-size:11px;color:#1a1a1a;white-space:nowrap;line-height:14px">08:ed:ed:e5:ca:37</div>
<div class="abs" style="left:508px;top:253.33px;font-size:11px;color:#1a1a1a;white-space:nowrap;line-height:14px">2.820.0000000.5.R</div>
<div class="abs" style="left:634.5px;top:250.63px"><svg class="qr" width="17" height="17" viewBox="0 0 17 17"><rect width="17" height="17" fill="#fff"/><g fill="#777777" shape-rendering="crispEdges"><rect x="1" y="1" width="1" height="1"/><rect x="2" y="1" width="1" height="1"/><rect x="3" y="1" width="1" height="1"/><rect x="4" y="1" width="1" height="1"/><rect x="5" y="1" width="1" height="1"/><rect x="8" y="1" width="1" height="1"/><rect x="10" y="1" width="1" height="1"/><rect x="11" y="1" width="1" height="1"/><rect x="12" y="1" width="1" height="1"/><rect x="13" y="1" width="1" height="1"/><rect x="14" y="1" width="1" height="1"/><rect x="15" y="1" width="1" height="1" fill="#5aaaee"/><rect x="1" y="2" width="1" height="1"/><rect x="3" y="2" width="1" height="1"/><rect x="5" y="2" width="1" height="1"/><rect x="8" y="2" width="1" height="1"/><rect x="9" y="2" width="1" height="1"/><rect x="13" y="2" width="1" height="1" fill="#5aaaee"/><rect x="15" y="2" width="1" height="1"/><rect x="1" y="3" width="1" height="1"/><rect x="3" y="3" width="1" height="1"/><rect x="5" y="3" width="1" height="1"/><rect x="7" y="3" width="1" height="1"/><rect x="10" y="3" width="1" height="1"/><rect x="11" y="3" width="1" height="1" fill="#5aaaee"/><rect x="12" y="3" width="1" height="1" fill="#5aaaee"/><rect x="13" y="3" width="1" height="1" fill="#5aaaee"/><rect x="15" y="3" width="1" height="1"/><rect x="1" y="4" width="1" height="1"/><rect x="3" y="4" width="1" height="1"/><rect x="5" y="4" width="1" height="1"/><rect x="8" y="4" width="1" height="1"/><rect x="10" y="4" width="1" height="1"/><rect x="11" y="4" width="1" height="1" fill="#5aaaee"/><rect x="12" y="4" width="1" height="1" fill="#5aaaee"/><rect x="15" y="4" width="1" height="1"/><rect x="1" y="5" width="1" height="1"/><rect x="2" y="5" width="1" height="1"/><rect x="3" y="5" width="1" height="1"/><rect x="4" y="5" width="1" height="1"/><rect x="5" y="5" width="1" height="1"/><rect x="6" y="5" width="1" height="1" fill="#5aaaee"/><rect x="7" y="5" width="1" height="1" fill="#5aaaee"/><rect x="9" y="5" width="1" height="1" fill="#5aaaee"/><rect x="10" y="5" width="1" height="1"/><rect x="11" y="5" width="1" height="1"/><rect x="12" y="5" width="1" height="1"/><rect x="13" y="5" width="1" height="1"/><rect x="14" y="5" width="1" height="1"/><rect x="7" y="6" width="1" height="1"/><rect x="8" y="6" width="1" height="1" fill="#5aaaee"/><rect x="9" y="6" width="1" height="1" fill="#5aaaee"/><rect x="1" y="7" width="1" height="1"/><rect x="2" y="7" width="1" height="1"/><rect x="4" y="7" width="1" height="1"/><rect x="5" y="7" width="1" height="1" fill="#5aaaee"/><rect x="6" y="7" width="1" height="1"/><rect x="8" y="7" width="1" height="1"/><rect x="10" y="7" width="1" height="1"/><rect x="11" y="7" width="1" height="1"/><rect x="13" y="7" width="1" height="1"/><rect x="15" y="7" width="1" height="1"/><rect x="1" y="8" width="1" height="1"/><rect x="3" y="8" width="1" height="1" fill="#5aaaee"/><rect x="4" y="8" width="1" height="1" fill="#5aaaee"/><rect x="6" y="8" width="1" height="1"/><rect x="8" y="8" width="1" height="1" fill="#5aaaee"/><rect x="9" y="8" width="1" height="1"/><rect x="12" y="8" width="1" height="1" fill="#5aaaee"/><rect x="13" y="8" width="1" height="1"/><rect x="1" y="9" width="1" height="1" fill="#5aaaee"/><rect x="2" y="9" width="1" height="1"/><rect x="4" y="9" width="1" height="1"/><rect x="5" y="9" width="1" height="1"/><rect x="7" y="9" width="1" height="1"/><rect x="9" y="9" width="1" height="1"/><rect x="11" y="9" width="1" height="1"/><rect x="13" y="9" width="1" height="1"/><rect x="14" y="9" width="1" height="1"/><rect x="1" y="10" width="1" height="1"/><rect x="2" y="10" width="1" height="1" fill="#5aaaee"/><rect x="3" y="10" width="1" height="1" fill="#5aaaee"/><rect x="4" y="10" width="1" height="1"/><rect x="5" y="10" width="1" height="1"/><rect x="6" y="10" width="1" height="1"/><rect x="7" y="10" width="1" height="1"/><rect x="9" y="10" width="1" height="1" fill="#5aaaee"/><rect x="12" y="10" width="1" height="1"/><rect x="14" y="10" width="1" height="1"/><rect x="1" y="11" width="1" height="1"/><rect x="2" y="11" width="1" height="1" fill="#5aaaee"/><rect x="3" y="11" width="1" height="1"/><rect x="4" y="11" width="1" height="1"/><rect x="6" y="11" width="1" height="1"/><rect x="7" y="11" width="1" height="1"/><rect x="10" y="11" width="1" height="1"/><rect x="11" y="11" width="1" height="1"/><rect x="13" y="11" width="1" height="1"/><rect x="15" y="11" width="1" height="1"/><rect x="1" y="12" width="1" height="1"/><rect x="2" y="12" width="1" height="1" fill="#5aaaee"/><rect x="3" y="12" width="1" height="1" fill="#5aaaee"/><rect x="4" y="12" width="1" height="1" fill="#5aaaee"/><rect x="5" y="12" width="1" height="1"/><rect x="7" y="12" width="1" height="1"/><rect x="9" y="12" width="1" height="1" fill="#5aaaee"/><rect x="12" y="12" width="1" height="1"/><rect x="13" y="12" width="1" height="1"/><rect x="1" y="13" width="1" height="1"/><rect x="3" y="13" width="1" height="1"/><rect x="5" y="13" width="1" height="1"/><rect x="8" y="13" width="1" height="1"/><rect x="9" y="13" width="1" height="1"/><rect x="11" y="13" width="1" height="1"/><rect x="14" y="13" width="1" height="1" fill="#5aaaee"/><rect x="15" y="13" width="1" height="1"/><rect x="1" y="14" width="1" height="1"/><rect x="2" y="14" width="1" height="1" fill="#5aaaee"/><rect x="3" y="14" width="1" height="1" fill="#5aaaee"/><rect x="5" y="14" width="1" height="1"/><rect x="7" y="14" width="1" height="1"/><rect x="10" y="14" width="1" height="1"/><rect x="12" y="14" width="1" height="1"/><rect x="15" y="14" width="1" height="1"/><rect x="1" y="15" width="1" height="1" fill="#5aaaee"/><rect x="2" y="15" width="1" height="1"/><rect x="3" y="15" width="1" height="1"/><rect x="4" y="15" width="1" height="1"/><rect x="5" y="15" width="1" height="1"/><rect x="7" y="15" width="1" height="1"/><rect x="8" y="15" width="1" height="1" fill="#5aaaee"/><rect x="9" y="15" width="1" height="1" fill="#5aaaee"/><rect x="11" y="15" width="1" height="1"/><rect x="13" y="15" width="1" height="1" fill="#5aaaee"/><rect x="14" y="15" width="1" height="1" fill="#5aaaee"/><rect x="15" y="15" width="1" height="1"/></g></svg></div>
<div class="abs" style="left:657px;top:250.33px"><svg class="xml" width="16" height="19" viewBox="0 0 16 19"><path d="M0.5 0.5h12.5l2.5 2.5v15.5h-15z" fill="#fff" stroke="#6f98d4" stroke-width="1"/>
<path d="M0 0h13l3 3v3.8h-16z" fill="#4a7cc6"/><path d="M13 0v3h3z" fill="#fff"/><path d="M13.3 0.8v2.4h2.2" fill="none" stroke="#4a7cc6" stroke-width="0.9"/>
<text x="1.3" y="5.9" font-family="Liberation Sans" font-size="5.6" font-weight="700" fill="#f4f8ff" letter-spacing="-0.2">XML</text>
<path d="M7 10.5l-2 1.7 2 1.7M9.3 10.5l2 1.7-2 1.7" fill="none" stroke="#5f8ccf" stroke-width="1.3"/></svg></div>
<div class="abs reset" style="left:717.3px;top:254.13px;font-size:11.6px;line-height:14px">Reset</div>
<div class="abs" style="left:0;top:273.35px;width:793px;height:27.5px;background:#f5f6fa"></div>
<div class="cb" style="left:8.7px;top:279.76px"></div>
<div class="abs" style="left:38.8px;top:280.66px;font-size:11px;color:#1a1a1a;white-space:nowrap;line-height:14px">35</div>
<div class="abs" style="left:78px;top:280.66px;font-size:11px;color:#1a1a1a;white-space:nowrap;line-height:14px">IPC</div>
<div class="abs" style="left:142px;top:280.66px;font-size:11px;color:#1a1a1a;white-space:nowrap;line-height:14px">N53AF5Z</div>
<div class="abs" style="left:270.5px;top:280.66px;font-size:11px;color:#1a1a1a;white-space:nowrap;line-height:14px">192.168.2.57</div>
<div class="abs" style="left:389px;top:280.66px;font-size:11px;color:#1a1a1a;white-space:nowrap;line-height:14px">a0:bd:1d:e3:2f:6c</div>
<div class="abs" style="left:508px;top:280.66px;font-size:11px;color:#1a1a1a;white-space:nowrap;line-height:14px">2.800.0000000.14.R</div>
<div class="abs" style="left:634.5px;top:277.96px"><svg class="qr" width="17" height="17" viewBox="0 0 17 17"><rect width="17" height="17" fill="#fff"/><g fill="#777777" shape-rendering="crispEdges"><rect x="1" y="1" width="1" height="1"/><rect x="2" y="1" width="1" height="1"/><rect x="3" y="1" width="1" height="1"/><rect x="4" y="1" width="1" height="1"/><rect x="5" y="1" width="1" height="1"/><rect x="8" y="1" width="1" height="1"/><rect x="10" y="1" width="1" height="1"/><rect x="11" y="1" width="1" height="1"/><rect x="12" y="1" width="1" height="1"/><rect x="13" y="1" width="1" height="1"/><rect x="14" y="1" width="1" height="1"/><rect x="15" y="1" width="1" height="1" fill="#5aaaee"/><rect x="1" y="2" width="1" height="1"/><rect x="3" y="2" width="1" height="1"/><rect x="5" y="2" width="1" height="1"/><rect x="8" y="2" width="1" height="1"/><rect x="9" y="2" width="1" height="1"/><rect x="13" y="2" width="1" height="1" fill="#5aaaee"/><rect x="15" y="2" width="1" height="1"/><rect x="1" y="3" width="1" height="1"/><rect x="3" y="3" width="1" height="1"/><rect x="5" y="3" width="1" height="1"/><rect x="7" y="3" width="1" height="1"/><rect x="10" y="3" width="1" height="1"/><rect x="11" y="3" width="1" height="1" fill="#5aaaee"/><rect x="12" y="3" width="1" height="1" fill="#5aaaee"/><rect x="13" y="3" width="1" height="1" fill="#5aaaee"/><rect x="15" y="3" width="1" height="1"/><rect x="1" y="4" width="1" height="1"/><rect x="3" y="4" width="1" height="1"/><rect x="5" y="4" width="1" height="1"/><rect x="8" y="4" width="1" height="1"/><rect x="10" y="4" width="1" height="1"/><rect x="11" y="4" width="1" height="1" fill="#5aaaee"/><rect x="12" y="4" width="1" height="1" fill="#5aaaee"/><rect x="15" y="4" width="1" height="1"/><rect x="1" y="5" width="1" height="1"/><rect x="2" y="5" width="1" height="1"/><rect x="3" y="5" width="1" height="1"/><rect x="4" y="5" width="1" height="1"/><rect x="5" y="5" width="1" height="1"/><rect x="6" y="5" width="1" height="1" fill="#5aaaee"/><rect x="7" y="5" width="1" height="1" fill="#5aaaee"/><rect x="9" y="5" width="1" height="1" fill="#5aaaee"/><rect x="10" y="5" width="1" height="1"/><rect x="11" y="5" width="1" height="1"/><rect x="12" y="5" width="1" height="1"/><rect x="13" y="5" width="1" height="1"/><rect x="14" y="5" width="1" height="1"/><rect x="7" y="6" width="1" height="1"/><rect x="8" y="6" width="1" height="1" fill="#5aaaee"/><rect x="9" y="6" width="1" height="1" fill="#5aaaee"/><rect x="1" y="7" width="1" height="1"/><rect x="2" y="7" width="1" height="1"/><rect x="4" y="7" width="1" height="1"/><rect x="5" y="7" width="1" height="1" fill="#5aaaee"/><rect x="6" y="7" width="1" height="1"/><rect x="8" y="7" width="1" height="1"/><rect x="10" y="7" width="1" height="1"/><rect x="11" y="7" width="1" height="1"/><rect x="13" y="7" width="1" height="1"/><rect x="15" y="7" width="1" height="1"/><rect x="1" y="8" width="1" height="1"/><rect x="3" y="8" width="1" height="1" fill="#5aaaee"/><rect x="4" y="8" width="1" height="1" fill="#5aaaee"/><rect x="6" y="8" width="1" height="1"/><rect x="8" y="8" width="1" height="1" fill="#5aaaee"/><rect x="9" y="8" width="1" height="1"/><rect x="12" y="8" width="1" height="1" fill="#5aaaee"/><rect x="13" y="8" width="1" height="1"/><rect x="1" y="9" width="1" height="1" fill="#5aaaee"/><rect x="2" y="9" width="1" height="1"/><rect x="4" y="9" width="1" height="1"/><rect x="5" y="9" width="1" height="1"/><rect x="7" y="9" width="1" height="1"/><rect x="9" y="9" width="1" height="1"/><rect x="11" y="9" width="1" height="1"/><rect x="13" y="9" width="1" height="1"/><rect x="14" y="9" width="1" height="1"/><rect x="1" y="10" width="1" height="1"/><rect x="2" y="10" width="1" height="1" fill="#5aaaee"/><rect x="3" y="10" width="1" height="1" fill="#5aaaee"/><rect x="4" y="10" width="1" height="1"/><rect x="5" y="10" width="1" height="1"/><rect x="6" y="10" width="1" height="1"/><rect x="7" y="10" width="1" height="1"/><rect x="9" y="10" width="1" height="1" fill="#5aaaee"/><rect x="12" y="10" width="1" height="1"/><rect x="14" y="10" width="1" height="1"/><rect x="1" y="11" width="1" height="1"/><rect x="2" y="11" width="1" height="1" fill="#5aaaee"/><rect x="3" y="11" width="1" height="1"/><rect x="4" y="11" width="1" height="1"/><rect x="6" y="11" width="1" height="1"/><rect x="7" y="11" width="1" height="1"/><rect x="10" y="11" width="1" height="1"/><rect x="11" y="11" width="1" height="1"/><rect x="13" y="11" width="1" height="1"/><rect x="15" y="11" width="1" height="1"/><rect x="1" y="12" width="1" height="1"/><rect x="2" y="12" width="1" height="1" fill="#5aaaee"/><rect x="3" y="12" width="1" height="1" fill="#5aaaee"/><rect x="4" y="12" width="1" height="1" fill="#5aaaee"/><rect x="5" y="12" width="1" height="1"/><rect x="7" y="12" width="1" height="1"/><rect x="9" y="12" width="1" height="1" fill="#5aaaee"/><rect x="12" y="12" width="1" height="1"/><rect x="13" y="12" width="1" height="1"/><rect x="1" y="13" width="1" height="1"/><rect x="3" y="13" width="1" height="1"/><rect x="5" y="13" width="1" height="1"/><rect x="8" y="13" width="1" height="1"/><rect x="9" y="13" width="1" height="1"/><rect x="11" y="13" width="1" height="1"/><rect x="14" y="13" width="1" height="1" fill="#5aaaee"/><rect x="15" y="13" width="1" height="1"/><rect x="1" y="14" width="1" height="1"/><rect x="2" y="14" width="1" height="1" fill="#5aaaee"/><rect x="3" y="14" width="1" height="1" fill="#5aaaee"/><rect x="5" y="14" width="1" height="1"/><rect x="7" y="14" width="1" height="1"/><rect x="10" y="14" width="1" height="1"/><rect x="12" y="14" width="1" height="1"/><rect x="15" y="14" width="1" height="1"/><rect x="1" y="15" width="1" height="1" fill="#5aaaee"/><rect x="2" y="15" width="1" height="1"/><rect x="3" y="15" width="1" height="1"/><rect x="4" y="15" width="1" height="1"/><rect x="5" y="15" width="1" height="1"/><rect x="7" y="15" width="1" height="1"/><rect x="8" y="15" width="1" height="1" fill="#5aaaee"/><rect x="9" y="15" width="1" height="1" fill="#5aaaee"/><rect x="11" y="15" width="1" height="1"/><rect x="13" y="15" width="1" height="1" fill="#5aaaee"/><rect x="14" y="15" width="1" height="1" fill="#5aaaee"/><rect x="15" y="15" width="1" height="1"/></g></svg></div>
<div class="abs" style="left:657px;top:277.66px"><svg class="xml" width="16" height="19" viewBox="0 0 16 19"><path d="M0.5 0.5h12.5l2.5 2.5v15.5h-15z" fill="#fff" stroke="#6f98d4" stroke-width="1"/>
<path d="M0 0h13l3 3v3.8h-16z" fill="#4a7cc6"/><path d="M13 0v3h3z" fill="#fff"/><path d="M13.3 0.8v2.4h2.2" fill="none" stroke="#4a7cc6" stroke-width="0.9"/>
<text x="1.3" y="5.9" font-family="Liberation Sans" font-size="5.6" font-weight="700" fill="#f4f8ff" letter-spacing="-0.2">XML</text>
<path d="M7 10.5l-2 1.7 2 1.7M9.3 10.5l2 1.7-2 1.7" fill="none" stroke="#5f8ccf" stroke-width="1.3"/></svg></div>
<div class="abs reset" style="left:717.3px;top:281.46px;font-size:11.6px;line-height:14px">Reset</div>
<div class="abs" style="left:0;top:300.75px;width:793px;height:27.5px;background:#fafafb"></div>
<div class="cb" style="left:8.7px;top:307.10px"></div>
<div class="abs" style="left:38.8px;top:308.00px;font-size:11px;color:#1a1a1a;white-space:nowrap;line-height:14px">36</div>
<div class="abs" style="left:78px;top:308.00px;font-size:11px;color:#1a1a1a;white-space:nowrap;line-height:14px">IPC</div>
<div class="abs" style="left:142px;top:308.00px;font-size:11px;color:#1a1a1a;white-space:nowrap;line-height:14px">N45EFN2</div>
<div class="abs" style="left:270.5px;top:308.00px;font-size:11px;color:#1a1a1a;white-space:nowrap;line-height:14px">192.168.2.127</div>
<div class="abs" style="left:389px;top:308.00px;font-size:11px;color:#1a1a1a;white-space:nowrap;line-height:14px">6c:1c:71:ba:d9:38</div>
<div class="abs" style="left:508px;top:308.00px;font-size:11px;color:#1a1a1a;white-space:nowrap;line-height:14px">2.840.0000000.2.R</div>
<div class="abs" style="left:634.5px;top:305.30px"><svg class="qr" width="17" height="17" viewBox="0 0 17 17"><rect width="17" height="17" fill="#fff"/><g fill="#777777" shape-rendering="crispEdges"><rect x="1" y="1" width="1" height="1"/><rect x="2" y="1" width="1" height="1"/><rect x="3" y="1" width="1" height="1"/><rect x="4" y="1" width="1" height="1"/><rect x="5" y="1" width="1" height="1"/><rect x="8" y="1" width="1" height="1"/><rect x="10" y="1" width="1" height="1"/><rect x="11" y="1" width="1" height="1"/><rect x="12" y="1" width="1" height="1"/><rect x="13" y="1" width="1" height="1"/><rect x="14" y="1" width="1" height="1"/><rect x="15" y="1" width="1" height="1" fill="#5aaaee"/><rect x="1" y="2" width="1" height="1"/><rect x="3" y="2" width="1" height="1"/><rect x="5" y="2" width="1" height="1"/><rect x="8" y="2" width="1" height="1"/><rect x="9" y="2" width="1" height="1"/><rect x="13" y="2" width="1" height="1" fill="#5aaaee"/><rect x="15" y="2" width="1" height="1"/><rect x="1" y="3" width="1" height="1"/><rect x="3" y="3" width="1" height="1"/><rect x="5" y="3" width="1" height="1"/><rect x="7" y="3" width="1" height="1"/><rect x="10" y="3" width="1" height="1"/><rect x="11" y="3" width="1" height="1" fill="#5aaaee"/><rect x="12" y="3" width="1" height="1" fill="#5aaaee"/><rect x="13" y="3" width="1" height="1" fill="#5aaaee"/><rect x="15" y="3" width="1" height="1"/><rect x="1" y="4" width="1" height="1"/><rect x="3" y="4" width="1" height="1"/><rect x="5" y="4" width="1" height="1"/><rect x="8" y="4" width="1" height="1"/><rect x="10" y="4" width="1" height="1"/><rect x="11" y="4" width="1" height="1" fill="#5aaaee"/><rect x="12" y="4" width="1" height="1" fill="#5aaaee"/><rect x="15" y="4" width="1" height="1"/><rect x="1" y="5" width="1" height="1"/><rect x="2" y="5" width="1" height="1"/><rect x="3" y="5" width="1" height="1"/><rect x="4" y="5" width="1" height="1"/><rect x="5" y="5" width="1" height="1"/><rect x="6" y="5" width="1" height="1" fill="#5aaaee"/><rect x="7" y="5" width="1" height="1" fill="#5aaaee"/><rect x="9" y="5" width="1" height="1" fill="#5aaaee"/><rect x="10" y="5" width="1" height="1"/><rect x="11" y="5" width="1" height="1"/><rect x="12" y="5" width="1" height="1"/><rect x="13" y="5" width="1" height="1"/><rect x="14" y="5" width="1" height="1"/><rect x="7" y="6" width="1" height="1"/><rect x="8" y="6" width="1" height="1" fill="#5aaaee"/><rect x="9" y="6" width="1" height="1" fill="#5aaaee"/><rect x="1" y="7" width="1" height="1"/><rect x="2" y="7" width="1" height="1"/><rect x="4" y="7" width="1" height="1"/><rect x="5" y="7" width="1" height="1" fill="#5aaaee"/><rect x="6" y="7" width="1" height="1"/><rect x="8" y="7" width="1" height="1"/><rect x="10" y="7" width="1" height="1"/><rect x="11" y="7" width="1" height="1"/><rect x="13" y="7" width="1" height="1"/><rect x="15" y="7" width="1" height="1"/><rect x="1" y="8" width="1" height="1"/><rect x="3" y="8" width="1" height="1" fill="#5aaaee"/><rect x="4" y="8" width="1" height="1" fill="#5aaaee"/><rect x="6" y="8" width="1" height="1"/><rect x="8" y="8" width="1" height="1" fill="#5aaaee"/><rect x="9" y="8" width="1" height="1"/><rect x="12" y="8" width="1" height="1" fill="#5aaaee"/><rect x="13" y="8" width="1" height="1"/><rect x="1" y="9" width="1" height="1" fill="#5aaaee"/><rect x="2" y="9" width="1" height="1"/><rect x="4" y="9" width="1" height="1"/><rect x="5" y="9" width="1" height="1"/><rect x="7" y="9" width="1" height="1"/><rect x="9" y="9" width="1" height="1"/><rect x="11" y="9" width="1" height="1"/><rect x="13" y="9" width="1" height="1"/><rect x="14" y="9" width="1" height="1"/><rect x="1" y="10" width="1" height="1"/><rect x="2" y="10" width="1" height="1" fill="#5aaaee"/><rect x="3" y="10" width="1" height="1" fill="#5aaaee"/><rect x="4" y="10" width="1" height="1"/><rect x="5" y="10" width="1" height="1"/><rect x="6" y="10" width="1" height="1"/><rect x="7" y="10" width="1" height="1"/><rect x="9" y="10" width="1" height="1" fill="#5aaaee"/><rect x="12" y="10" width="1" height="1"/><rect x="14" y="10" width="1" height="1"/><rect x="1" y="11" width="1" height="1"/><rect x="2" y="11" width="1" height="1" fill="#5aaaee"/><rect x="3" y="11" width="1" height="1"/><rect x="4" y="11" width="1" height="1"/><rect x="6" y="11" width="1" height="1"/><rect x="7" y="11" width="1" height="1"/><rect x="10" y="11" width="1" height="1"/><rect x="11" y="11" width="1" height="1"/><rect x="13" y="11" width="1" height="1"/><rect x="15" y="11" width="1" height="1"/><rect x="1" y="12" width="1" height="1"/><rect x="2" y="12" width="1" height="1" fill="#5aaaee"/><rect x="3" y="12" width="1" height="1" fill="#5aaaee"/><rect x="4" y="12" width="1" height="1" fill="#5aaaee"/><rect x="5" y="12" width="1" height="1"/><rect x="7" y="12" width="1" height="1"/><rect x="9" y="12" width="1" height="1" fill="#5aaaee"/><rect x="12" y="12" width="1" height="1"/><rect x="13" y="12" width="1" height="1"/><rect x="1" y="13" width="1" height="1"/><rect x="3" y="13" width="1" height="1"/><rect x="5" y="13" width="1" height="1"/><rect x="8" y="13" width="1" height="1"/><rect x="9" y="13" width="1" height="1"/><rect x="11" y="13" width="1" height="1"/><rect x="14" y="13" width="1" height="1" fill="#5aaaee"/><rect x="15" y="13" width="1" height="1"/><rect x="1" y="14" width="1" height="1"/><rect x="2" y="14" width="1" height="1" fill="#5aaaee"/><rect x="3" y="14" width="1" height="1" fill="#5aaaee"/><rect x="5" y="14" width="1" height="1"/><rect x="7" y="14" width="1" height="1"/><rect x="10" y="14" width="1" height="1"/><rect x="12" y="14" width="1" height="1"/><rect x="15" y="14" width="1" height="1"/><rect x="1" y="15" width="1" height="1" fill="#5aaaee"/><rect x="2" y="15" width="1" height="1"/><rect x="3" y="15" width="1" height="1"/><rect x="4" y="15" width="1" height="1"/><rect x="5" y="15" width="1" height="1"/><rect x="7" y="15" width="1" height="1"/><rect x="8" y="15" width="1" height="1" fill="#5aaaee"/><rect x="9" y="15" width="1" height="1" fill="#5aaaee"/><rect x="11" y="15" width="1" height="1"/><rect x="13" y="15" width="1" height="1" fill="#5aaaee"/><rect x="14" y="15" width="1" height="1" fill="#5aaaee"/><rect x="15" y="15" width="1" height="1"/></g></svg></div>
<div class="abs" style="left:657px;top:305.00px"><svg class="xml" width="16" height="19" viewBox="0 0 16 19"><path d="M0.5 0.5h12.5l2.5 2.5v15.5h-15z" fill="#fff" stroke="#6f98d4" stroke-width="1"/>
<path d="M0 0h13l3 3v3.8h-16z" fill="#4a7cc6"/><path d="M13 0v3h3z" fill="#fff"/><path d="M13.3 0.8v2.4h2.2" fill="none" stroke="#4a7cc6" stroke-width="0.9"/>
<text x="1.3" y="5.9" font-family="Liberation Sans" font-size="5.6" font-weight="700" fill="#f4f8ff" letter-spacing="-0.2">XML</text>
<path d="M7 10.5l-2 1.7 2 1.7M9.3 10.5l2 1.7-2 1.7" fill="none" stroke="#5f8ccf" stroke-width="1.3"/></svg></div>
<div class="abs reset" style="left:717.3px;top:308.80px;font-size:11.6px;line-height:14px">Reset</div>
<div class="abs" style="left:0;top:328.15px;width:793px;height:27.5px;background:#f5f6fa"></div>
<div class="cb" style="left:8.7px;top:334.43px"></div>
<div class="abs" style="left:38.8px;top:335.33px;font-size:11px;color:#1a1a1a;white-space:nowrap;line-height:14px">37</div>
<div class="abs" style="left:78px;top:335.33px;font-size:11px;color:#1a1a1a;white-space:nowrap;line-height:14px">IPC</div>
<div class="abs" style="left:142px;top:335.33px;font-size:11px;color:#1a1a1a;white-space:nowrap;line-height:14px">IPC-HDBW4231F-E2-M</div>
<div class="abs" style="left:270.5px;top:335.33px;font-size:11px;color:#1a1a1a;white-space:nowrap;line-height:14px">192.168.2.54</div>
<div class="abs" style="left:389px;top:335.33px;font-size:11px;color:#1a1a1a;white-space:nowrap;line-height:14px">38:af:29:15:c1:87</div>
<div class="abs" style="left:508px;top:335.33px;font-size:11px;color:#1a1a1a;white-space:nowrap;line-height:14px">2.622.0000000.32.R</div>
<div class="abs" style="left:634.5px;top:332.63px"><svg class="qr" width="17" height="17" viewBox="0 0 17 17"><rect width="17" height="17" fill="#fff"/><g fill="#777777" shape-rendering="crispEdges"><rect x="1" y="1" width="1" height="1"/><rect x="2" y="1" width="1" height="1"/><rect x="3" y="1" width="1" height="1"/><rect x="4" y="1" width="1" height="1"/><rect x="5" y="1" width="1" height="1"/><rect x="8" y="1" width="1" height="1"/><rect x="10" y="1" width="1" height="1"/><rect x="11" y="1" width="1" height="1"/><rect x="12" y="1" width="1" height="1"/><rect x="13" y="1" width="1" height="1"/><rect x="14" y="1" width="1" height="1"/><rect x="15" y="1" width="1" height="1" fill="#5aaaee"/><rect x="1" y="2" width="1" height="1"/><rect x="3" y="2" width="1" height="1"/><rect x="5" y="2" width="1" height="1"/><rect x="8" y="2" width="1" height="1"/><rect x="9" y="2" width="1" height="1"/><rect x="13" y="2" width="1" height="1" fill="#5aaaee"/><rect x="15" y="2" width="1" height="1"/><rect x="1" y="3" width="1" height="1"/><rect x="3" y="3" width="1" height="1"/><rect x="5" y="3" width="1" height="1"/><rect x="7" y="3" width="1" height="1"/><rect x="10" y="3" width="1" height="1"/><rect x="11" y="3" width="1" height="1" fill="#5aaaee"/><rect x="12" y="3" width="1" height="1" fill="#5aaaee"/><rect x="13" y="3" width="1" height="1" fill="#5aaaee"/><rect x="15" y="3" width="1" height="1"/><rect x="1" y="4" width="1" height="1"/><rect x="3" y="4" width="1" height="1"/><rect x="5" y="4" width="1" height="1"/><rect x="8" y="4" width="1" height="1"/><rect x="10" y="4" width="1" height="1"/><rect x="11" y="4" width="1" height="1" fill="#5aaaee"/><rect x="12" y="4" width="1" height="1" fill="#5aaaee"/><rect x="15" y="4" width="1" height="1"/><rect x="1" y="5" width="1" height="1"/><rect x="2" y="5" width="1" height="1"/><rect x="3" y="5" width="1" height="1"/><rect x="4" y="5" width="1" height="1"/><rect x="5" y="5" width="1" height="1"/><rect x="6" y="5" width="1" height="1" fill="#5aaaee"/><rect x="7" y="5" width="1" height="1" fill="#5aaaee"/><rect x="9" y="5" width="1" height="1" fill="#5aaaee"/><rect x="10" y="5" width="1" height="1"/><rect x="11" y="5" width="1" height="1"/><rect x="12" y="5" width="1" height="1"/><rect x="13" y="5" width="1" height="1"/><rect x="14" y="5" width="1" height="1"/><rect x="7" y="6" width="1" height="1"/><rect x="8" y="6" width="1" height="1" fill="#5aaaee"/><rect x="9" y="6" width="1" height="1" fill="#5aaaee"/><rect x="1" y="7" width="1" height="1"/><rect x="2" y="7" width="1" height="1"/><rect x="4" y="7" width="1" height="1"/><rect x="5" y="7" width="1" height="1" fill="#5aaaee"/><rect x="6" y="7" width="1" height="1"/><rect x="8" y="7" width="1" height="1"/><rect x="10" y="7" width="1" height="1"/><rect x="11" y="7" width="1" height="1"/><rect x="13" y="7" width="1" height="1"/><rect x="15" y="7" width="1" height="1"/><rect x="1" y="8" width="1" height="1"/><rect x="3" y="8" width="1" height="1" fill="#5aaaee"/><rect x="4" y="8" width="1" height="1" fill="#5aaaee"/><rect x="6" y="8" width="1" height="1"/><rect x="8" y="8" width="1" height="1" fill="#5aaaee"/><rect x="9" y="8" width="1" height="1"/><rect x="12" y="8" width="1" height="1" fill="#5aaaee"/><rect x="13" y="8" width="1" height="1"/><rect x="1" y="9" width="1" height="1" fill="#5aaaee"/><rect x="2" y="9" width="1" height="1"/><rect x="4" y="9" width="1" height="1"/><rect x="5" y="9" width="1" height="1"/><rect x="7" y="9" width="1" height="1"/><rect x="9" y="9" width="1" height="1"/><rect x="11" y="9" width="1" height="1"/><rect x="13" y="9" width="1" height="1"/><rect x="14" y="9" width="1" height="1"/><rect x="1" y="10" width="1" height="1"/><rect x="2" y="10" width="1" height="1" fill="#5aaaee"/><rect x="3" y="10" width="1" height="1" fill="#5aaaee"/><rect x="4" y="10" width="1" height="1"/><rect x="5" y="10" width="1" height="1"/><rect x="6" y="10" width="1" height="1"/><rect x="7" y="10" width="1" height="1"/><rect x="9" y="10" width="1" height="1" fill="#5aaaee"/><rect x="12" y="10" width="1" height="1"/><rect x="14" y="10" width="1" height="1"/><rect x="1" y="11" width="1" height="1"/><rect x="2" y="11" width="1" height="1" fill="#5aaaee"/><rect x="3" y="11" width="1" height="1"/><rect x="4" y="11" width="1" height="1"/><rect x="6" y="11" width="1" height="1"/><rect x="7" y="11" width="1" height="1"/><rect x="10" y="11" width="1" height="1"/><rect x="11" y="11" width="1" height="1"/><rect x="13" y="11" width="1" height="1"/><rect x="15" y="11" width="1" height="1"/><rect x="1" y="12" width="1" height="1"/><rect x="2" y="12" width="1" height="1" fill="#5aaaee"/><rect x="3" y="12" width="1" height="1" fill="#5aaaee"/><rect x="4" y="12" width="1" height="1" fill="#5aaaee"/><rect x="5" y="12" width="1" height="1"/><rect x="7" y="12" width="1" height="1"/><rect x="9" y="12" width="1" height="1" fill="#5aaaee"/><rect x="12" y="12" width="1" height="1"/><rect x="13" y="12" width="1" height="1"/><rect x="1" y="13" width="1" height="1"/><rect x="3" y="13" width="1" height="1"/><rect x="5" y="13" width="1" height="1"/><rect x="8" y="13" width="1" height="1"/><rect x="9" y="13" width="1" height="1"/><rect x="11" y="13" width="1" height="1"/><rect x="14" y="13" width="1" height="1" fill="#5aaaee"/><rect x="15" y="13" width="1" height="1"/><rect x="1" y="14" width="1" height="1"/><rect x="2" y="14" width="1" height="1" fill="#5aaaee"/><rect x="3" y="14" width="1" height="1" fill="#5aaaee"/><rect x="5" y="14" width="1" height="1"/><rect x="7" y="14" width="1" height="1"/><rect x="10" y="14" width="1" height="1"/><rect x="12" y="14" width="1" height="1"/><rect x="15" y="14" width="1" height="1"/><rect x="1" y="15" width="1" height="1" fill="#5aaaee"/><rect x="2" y="15" width="1" height="1"/><rect x="3" y="15" width="1" height="1"/><rect x="4" y="15" width="1" height="1"/><rect x="5" y="15" width="1" height="1"/><rect x="7" y="15" width="1" height="1"/><rect x="8" y="15" width="1" height="1" fill="#5aaaee"/><rect x="9" y="15" width="1" height="1" fill="#5aaaee"/><rect x="11" y="15" width="1" height="1"/><rect x="13" y="15" width="1" height="1" fill="#5aaaee"/><rect x="14" y="15" width="1" height="1" fill="#5aaaee"/><rect x="15" y="15" width="1" height="1"/></g></svg></div>
<div class="abs" style="left:657px;top:332.33px"><svg class="xml" width="16" height="19" viewBox="0 0 16 19"><path d="M0.5 0.5h12.5l2.5 2.5v15.5h-15z" fill="#fff" stroke="#6f98d4" stroke-width="1"/>
<path d="M0 0h13l3 3v3.8h-16z" fill="#4a7cc6"/><path d="M13 0v3h3z" fill="#fff"/><path d="M13.3 0.8v2.4h2.2" fill="none" stroke="#4a7cc6" stroke-width="0.9"/>
<text x="1.3" y="5.9" font-family="Liberation Sans" font-size="5.6" font-weight="700" fill="#f4f8ff" letter-spacing="-0.2">XML</text>
<path d="M7 10.5l-2 1.7 2 1.7M9.3 10.5l2 1.7-2 1.7" fill="none" stroke="#5f8ccf" stroke-width="1.3"/></svg></div>
<div class="abs reset" style="left:717.3px;top:336.13px;font-size:11.6px;line-height:14px">Reset</div>
<div class="abs" style="left:0;top:355.55px;width:793px;height:27.5px;background:#fafafb"></div>
<div class="cb" style="left:8.7px;top:361.75px"></div>
<div class="abs" style="left:38.8px;top:362.65px;font-size:11px;color:#1a1a1a;white-space:nowrap;line-height:14px">38</div>
<div class="abs" style="left:78px;top:362.65px;font-size:11px;color:#1a1a1a;white-space:nowrap;line-height:14px">IPC</div>
<div class="abs" style="left:142px;top:362.65px;font-size:11px;color:#1a1a1a;white-space:nowrap;line-height:14px">N85EFN2</div>
<div class="abs" style="left:270.5px;top:362.65px;font-size:11px;color:#1a1a1a;white-space:nowrap;line-height:14px">192.168.2.124</div>
<div class="abs" style="left:389px;top:362.65px;font-size:11px;color:#1a1a1a;white-space:nowrap;line-height:14px">b4:4c:3b:36:4b:a7</div>
<div class="abs" style="left:508px;top:362.65px;font-size:11px;color:#1a1a1a;white-space:nowrap;line-height:14px">2.840.0000000.2.R</div>
<div class="abs" style="left:634.5px;top:359.95px"><svg class="qr" width="17" height="17" viewBox="0 0 17 17"><rect width="17" height="17" fill="#fff"/><g fill="#777777" shape-rendering="crispEdges"><rect x="1" y="1" width="1" height="1"/><rect x="2" y="1" width="1" height="1"/><rect x="3" y="1" width="1" height="1"/><rect x="4" y="1" width="1" height="1"/><rect x="5" y="1" width="1" height="1"/><rect x="8" y="1" width="1" height="1"/><rect x="10" y="1" width="1" height="1"/><rect x="11" y="1" width="1" height="1"/><rect x="12" y="1" width="1" height="1"/><rect x="13" y="1" width="1" height="1"/><rect x="14" y="1" width="1" height="1"/><rect x="15" y="1" width="1" height="1" fill="#5aaaee"/><rect x="1" y="2" width="1" height="1"/><rect x="3" y="2" width="1" height="1"/><rect x="5" y="2" width="1" height="1"/><rect x="8" y="2" width="1" height="1"/><rect x="9" y="2" width="1" height="1"/><rect x="13" y="2" width="1" height="1" fill="#5aaaee"/><rect x="15" y="2" width="1" height="1"/><rect x="1" y="3" width="1" height="1"/><rect x="3" y="3" width="1" height="1"/><rect x="5" y="3" width="1" height="1"/><rect x="7" y="3" width="1" height="1"/><rect x="10" y="3" width="1" height="1"/><rect x="11" y="3" width="1" height="1" fill="#5aaaee"/><rect x="12" y="3" width="1" height="1" fill="#5aaaee"/><rect x="13" y="3" width="1" height="1" fill="#5aaaee"/><rect x="15" y="3" width="1" height="1"/><rect x="1" y="4" width="1" height="1"/><rect x="3" y="4" width="1" height="1"/><rect x="5" y="4" width="1" height="1"/><rect x="8" y="4" width="1" height="1"/><rect x="10" y="4" width="1" height="1"/><rect x="11" y="4" width="1" height="1" fill="#5aaaee"/><rect x="12" y="4" width="1" height="1" fill="#5aaaee"/><rect x="15" y="4" width="1" height="1"/><rect x="1" y="5" width="1" height="1"/><rect x="2" y="5" width="1" height="1"/><rect x="3" y="5" width="1" height="1"/><rect x="4" y="5" width="1" height="1"/><rect x="5" y="5" width="1" height="1"/><rect x="6" y="5" width="1" height="1" fill="#5aaaee"/><rect x="7" y="5" width="1" height="1" fill="#5aaaee"/><rect x="9" y="5" width="1" height="1" fill="#5aaaee"/><rect x="10" y="5" width="1" height="1"/><rect x="11" y="5" width="1" height="1"/><rect x="12" y="5" width="1" height="1"/><rect x="13" y="5" width="1" height="1"/><rect x="14" y="5" width="1" height="1"/><rect x="7" y="6" width="1" height="1"/><rect x="8" y="6" width="1" height="1" fill="#5aaaee"/><rect x="9" y="6" width="1" height="1" fill="#5aaaee"/><rect x="1" y="7" width="1" height="1"/><rect x="2" y="7" width="1" height="1"/><rect x="4" y="7" width="1" height="1"/><rect x="5" y="7" width="1" height="1" fill="#5aaaee"/><rect x="6" y="7" width="1" height="1"/><rect x="8" y="7" width="1" height="1"/><rect x="10" y="7" width="1" height="1"/><rect x="11" y="7" width="1" height="1"/><rect x="13" y="7" width="1" height="1"/><rect x="15" y="7" width="1" height="1"/><rect x="1" y="8" width="1" height="1"/><rect x="3" y="8" width="1" height="1" fill="#5aaaee"/><rect x="4" y="8" width="1" height="1" fill="#5aaaee"/><rect x="6" y="8" width="1" height="1"/><rect x="8" y="8" width="1" height="1" fill="#5aaaee"/><rect x="9" y="8" width="1" height="1"/><rect x="12" y="8" width="1" height="1" fill="#5aaaee"/><rect x="13" y="8" width="1" height="1"/><rect x="1" y="9" width="1" height="1" fill="#5aaaee"/><rect x="2" y="9" width="1" height="1"/><rect x="4" y="9" width="1" height="1"/><rect x="5" y="9" width="1" height="1"/><rect x="7" y="9" width="1" height="1"/><rect x="9" y="9" width="1" height="1"/><rect x="11" y="9" width="1" height="1"/><rect x="13" y="9" width="1" height="1"/><rect x="14" y="9" width="1" height="1"/><rect x="1" y="10" width="1" height="1"/><rect x="2" y="10" width="1" height="1" fill="#5aaaee"/><rect x="3" y="10" width="1" height="1" fill="#5aaaee"/><rect x="4" y="10" width="1" height="1"/><rect x="5" y="10" width="1" height="1"/><rect x="6" y="10" width="1" height="1"/><rect x="7" y="10" width="1" height="1"/><rect x="9" y="10" width="1" height="1" fill="#5aaaee"/><rect x="12" y="10" width="1" height="1"/><rect x="14" y="10" width="1" height="1"/><rect x="1" y="11" width="1" height="1"/><rect x="2" y="11" width="1" height="1" fill="#5aaaee"/><rect x="3" y="11" width="1" height="1"/><rect x="4" y="11" width="1" height="1"/><rect x="6" y="11" width="1" height="1"/><rect x="7" y="11" width="1" height="1"/><rect x="10" y="11" width="1" height="1"/><rect x="11" y="11" width="1" height="1"/><rect x="13" y="11" width="1" height="1"/><rect x="15" y="11" width="1" height="1"/><rect x="1" y="12" width="1" height="1"/><rect x="2" y="12" width="1" height="1" fill="#5aaaee"/><rect x="3" y="12" width="1" height="1" fill="#5aaaee"/><rect x="4" y="12" width="1" height="1" fill="#5aaaee"/><rect x="5" y="12" width="1" height="1"/><rect x="7" y="12" width="1" height="1"/><rect x="9" y="12" width="1" height="1" fill="#5aaaee"/><rect x="12" y="12" width="1" height="1"/><rect x="13" y="12" width="1" height="1"/><rect x="1" y="13" width="1" height="1"/><rect x="3" y="13" width="1" height="1"/><rect x="5" y="13" width="1" height="1"/><rect x="8" y="13" width="1" height="1"/><rect x="9" y="13" width="1" height="1"/><rect x="11" y="13" width="1" height="1"/><rect x="14" y="13" width="1" height="1" fill="#5aaaee"/><rect x="15" y="13" width="1" height="1"/><rect x="1" y="14" width="1" height="1"/><rect x="2" y="14" width="1" height="1" fill="#5aaaee"/><rect x="3" y="14" width="1" height="1" fill="#5aaaee"/><rect x="5" y="14" width="1" height="1"/><rect x="7" y="14" width="1" height="1"/><rect x="10" y="14" width="1" height="1"/><rect x="12" y="14" width="1" height="1"/><rect x="15" y="14" width="1" height="1"/><rect x="1" y="15" width="1" height="1" fill="#5aaaee"/><rect x="2" y="15" width="1" height="1"/><rect x="3" y="15" width="1" height="1"/><rect x="4" y="15" width="1" height="1"/><rect x="5" y="15" width="1" height="1"/><rect x="7" y="15" width="1" height="1"/><rect x="8" y="15" width="1" height="1" fill="#5aaaee"/><rect x="9" y="15" width="1" height="1" fill="#5aaaee"/><rect x="11" y="15" width="1" height="1"/><rect x="13" y="15" width="1" height="1" fill="#5aaaee"/><rect x="14" y="15" width="1" height="1" fill="#5aaaee"/><rect x="15" y="15" width="1" height="1"/></g></svg></div>
<div class="abs" style="left:657px;top:359.65px"><svg class="xml" width="16" height="19" viewBox="0 0 16 19"><path d="M0.5 0.5h12.5l2.5 2.5v15.5h-15z" fill="#fff" stroke="#6f98d4" stroke-width="1"/>
<path d="M0 0h13l3 3v3.8h-16z" fill="#4a7cc6"/><path d="M13 0v3h3z" fill="#fff"/><path d="M13.3 0.8v2.4h2.2" fill="none" stroke="#4a7cc6" stroke-width="0.9"/>
<text x="1.3" y="5.9" font-family="Liberation Sans" font-size="5.6" font-weight="700" fill="#f4f8ff" letter-spacing="-0.2">XML</text>
<path d="M7 10.5l-2 1.7 2 1.7M9.3 10.5l2 1.7-2 1.7" fill="none" stroke="#5f8ccf" stroke-width="1.3"/></svg></div>
<div class="abs reset" style="left:717.3px;top:363.45px;font-size:11.6px;line-height:14px">Reset</div>
</div>
<div class="abs" style="left:985px;top:292px;width:6px;height:76px;border-radius:3px;background:linear-gradient(90deg,#cfcfcf,#8f8f8f)"></div>
<div class="abs" style="left:838px;top:210.5px;width:34px;height:32.5px;border:4.4px solid #e8141e"></div>
<div class="abs" style="left:897px;top:212px;width:53px;height:31px;border:4px solid #e8141e"></div>
<div class="abs" style="left:190px;top:557px;width:800px;height:1px;background:#e3e3e6"></div>
<div class="abs" style="left:199.5px;top:577.5px;font-size:13.5px;font-weight:700;color:#383838;white-space:pre">You have selected 1</div>
<div class="abs" style="left:336px;top:577.5px;font-size:13.5px;letter-spacing:0.25px;font-weight:700;color:#383838;white-space:pre">device(s)</div>
<div class="cb cbon" style="left:440px;top:578px"><svg width="11" height="11" style="position:absolute;left:0.5px;top:0.5px"><path d="M2.6 5.6l2.1 2 3.9-3.8" fill="none" stroke="#e8eeff" stroke-width="1"/></svg></div>
<div class="abs" style="left:479px;top:579.6px;font-size:11px;color:#333">All</div>
<div class="cb cbon" style="left:531px;top:578px"><svg width="11" height="11" style="position:absolute;left:0.5px;top:0.5px"><path d="M2.6 5.6l2.1 2 3.9-3.8" fill="none" stroke="#e8eeff" stroke-width="1"/></svg></div>
<div class="abs" style="left:561px;top:579.6px;font-size:11px;color:#333">QR Mode</div>
<div class="cb cbon" style="left:622px;top:578px"><svg width="11" height="11" style="position:absolute;left:0.5px;top:0.5px"><path d="M2.6 5.6l2.1 2 3.9-3.8" fill="none" stroke="#e8eeff" stroke-width="1"/></svg></div>
<div class="abs" style="left:651px;top:579.6px;font-size:11px;color:#333">XML Mode</div>
<div class="cb cbon" style="left:713px;top:578px"><svg width="11" height="11" style="position:absolute;left:0.5px;top:0.5px"><path d="M2.6 5.6l2.1 2 3.9-3.8" fill="none" stroke="#e8eeff" stroke-width="1"/></svg></div>
<div class="abs" style="left:745px;top:579.6px;font-size:11px;color:#333">Other</div>
</body></html>
